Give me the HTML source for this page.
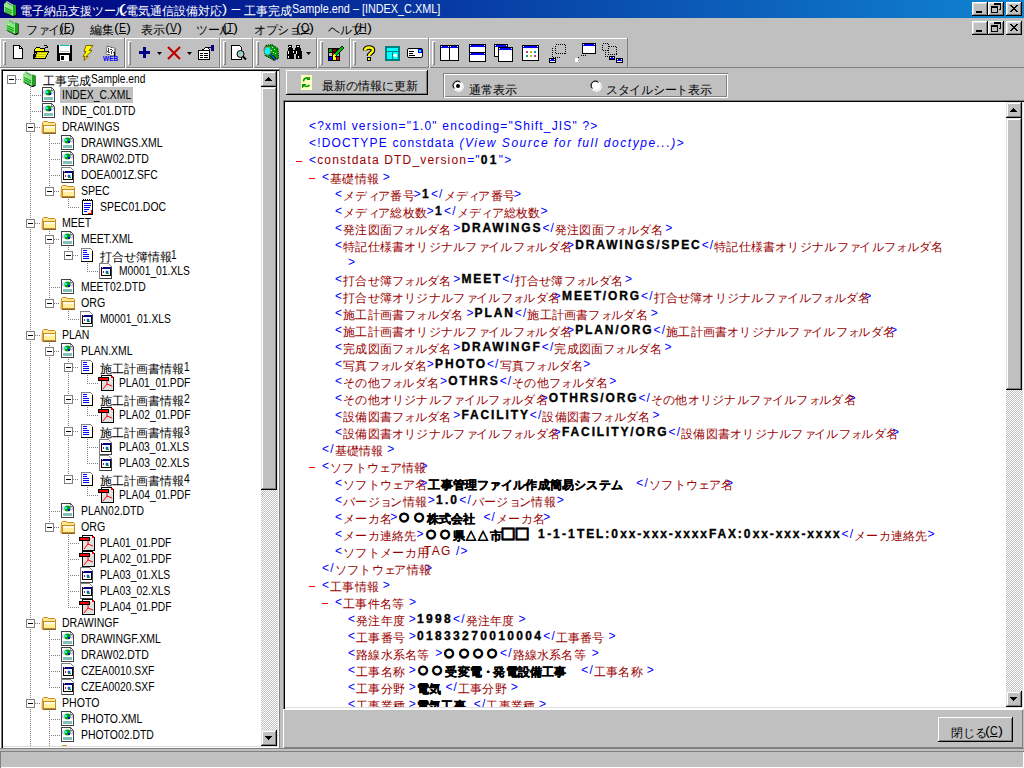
<!DOCTYPE html>
<html><head><meta charset="utf-8"><style>@font-face{font-family:J10;src:local("Liberation Sans");size-adjust:83.333%;unicode-range:U+2500-FFFF}
@font-face{font-family:J12;src:local("Liberation Sans");size-adjust:100.000%;unicode-range:U+2500-FFFF}
@font-face{font-family:J13;src:local("Liberation Sans");size-adjust:108.333%;unicode-range:U+2500-FFFF}
@font-face{font-family:J14;src:local("Liberation Sans");size-adjust:116.667%;unicode-range:U+2500-FFFF}
@font-face{font-family:J16;src:local("Liberation Sans");size-adjust:133.333%;unicode-range:U+2500-FFFF}
@font-face{font-family:J17;src:local("Liberation Sans");size-adjust:141.667%;unicode-range:U+2500-FFFF}
@font-face{font-family:J18;src:local("Liberation Sans");size-adjust:150.000%;unicode-range:U+2500-FFFF}
@font-face{font-family:J20;src:local("Liberation Sans");size-adjust:166.667%;unicode-range:U+2500-FFFF}

.sx{display:inline-block;transform-origin:0 50%;white-space:pre}
u .sx{text-decoration:underline}
.jb{display:inline-block;font-size:12px;line-height:0;position:relative;top:2px}
*{margin:0;padding:0;box-sizing:border-box}
html,body{width:1024px;height:768px;overflow:hidden}
body{background:#c0c0c0;font-family:"Liberation Sans",sans-serif;font-size:12px;position:relative;color:#000}
.a{position:absolute}
.raised{background:#c0c0c0;box-shadow:inset -1px -1px #000,inset 1px 1px #fff,inset -2px -2px #808080}
.sbtn{background:#c0c0c0;box-shadow:inset -1px -1px #000,inset 1px 1px #dfdfdf,inset -2px -2px #808080,inset 2px 2px #fff}
.wb{width:16px;height:14px;background:#c0c0c0;box-shadow:inset -1px -1px #000,inset 1px 1px #fff,inset -2px -2px #808080,inset 2px 2px #dfdfdf}
.menu>span{position:absolute;top:3px;white-space:nowrap;line-height:14px}
u{text-decoration:underline}
.dith{background-color:#fff;background-image:linear-gradient(45deg,#c0c0c0 25%,transparent 25%,transparent 75%,#c0c0c0 75%),linear-gradient(45deg,#c0c0c0 25%,transparent 25%,transparent 75%,#c0c0c0 75%);background-size:2px 2px;background-position:0 0,1px 1px}
.vl{position:absolute;width:1px;background:repeating-linear-gradient(to bottom,#808080 0 1px,transparent 1px 2px)}
.hl{position:absolute;height:1px;background:repeating-linear-gradient(to right,#808080 0 1px,transparent 1px 2px)}
.bx{position:absolute;width:9px;height:9px;border:1px solid #808080;background:#fff}
.bx:after{content:"";position:absolute;left:1px;top:3px;width:5px;height:1px;background:#000}
.tr{position:absolute;white-space:nowrap;line-height:16px;height:16px}
.xl{position:absolute;white-space:nowrap;font-size:12px;line-height:17px;height:17px}
.m{color:#0000ff}.n{color:#990000}.b{font-weight:bold;color:#000;-webkit-text-stroke:0.35px #000}.r{color:#ff0000}
</style></head><body>
<div class="a" style="left:0;top:0;width:1024px;height:18px;background:linear-gradient(to right,#000080 0%,#1084d0 100%)"><svg class="a" style="left:3px;top:1px" width="16" height="16" viewBox="0 0 16 16" shape-rendering="crispEdges"><path d="M1 3L4 0L10 3.5L13 4L13 14L10 15.5L1 11Z" fill="#000" transform="translate(0.6,0.8)" shape-rendering="geometricPrecision"/><path d="M1 3L4 0L10 3.5L10 15L1 11Z" fill="#8ce68c" shape-rendering="geometricPrecision"/><path d="M10 3.5L13 4L13 14L10 15Z" fill="#1aa51a" shape-rendering="geometricPrecision"/><path d="M2 6.5L9 10M2 8.5L9 12M2 10.5L8 13.5" stroke="#1aa51a" stroke-width="1.1" shape-rendering="geometricPrecision"/><rect x="3" y="5" width="1" height="1" fill="#ffff80"/><path d="M4 1.5L9 4.5" stroke="#806080" stroke-width="0.8" shape-rendering="geometricPrecision"/></svg><div class="a" style="left:20px;top:2px;color:#fff;white-space:nowrap;line-height:14px"><span class="jb" style="width:98.1px"><span style="font-family:J16;letter-spacing:0px">電子納品支援</span><span style="font-family:J12;letter-spacing:-0.3px">ツール</span></span><span class="sx" style="transform:scaleX(2.0000);margin-right:4.0px">(</span><span class="jb" style="width:96px"><span style="font-family:J16;letter-spacing:0px">電気通信設備対応</span></span><span class="sx" style="transform:scaleX(1.2941);margin-right:5.0px">) – </span><span class="jb" style="width:48px"><span style="font-family:J16;letter-spacing:0px">工事完成</span></span><span class="sx" style="transform:scaleX(0.9036);margin-right:-16.0px">Sample.end – [INDEX_C.XML]</span></div><div class="a wb" style="left:972px;top:2px"><div class="a" style="left:4px;top:9px;width:6px;height:2px;background:#000"></div></div><div class="a wb" style="left:988px;top:2px"><svg class="a" style="left:3px;top:1px" width="10" height="10" viewBox="0 0 10 10" shape-rendering="crispEdges"><path d="M3 0.5h6.5v5.5h-2M3 1.5h6.5" fill="none" stroke="#000"/><rect x="0.5" y="3.5" width="6" height="6" fill="none" stroke="#000"/><path d="M0.5 4.5h6" stroke="#000"/></svg></div><div class="a wb" style="left:1006px;top:2px"><svg class="a" style="left:4px;top:3px" width="8" height="7" viewBox="0 0 8 7" shape-rendering="crispEdges"><path d="M0 0L2 0L4 2.5L6 0L8 0L5 3.5L8 7L6 7L4 4.5L2 7L0 7L3 3.5Z" fill="#000"/></svg></div></div>
<div class="a menu" style="left:0;top:18px;width:1024px;height:20px"><svg class="a" style="left:5px;top:1px" width="16" height="16" viewBox="0 0 16 16" shape-rendering="crispEdges"><path d="M1 3L4 0L10 3.5L13 4L13 14L10 15.5L1 11Z" fill="#000" transform="translate(0.6,0.8)" shape-rendering="geometricPrecision"/><path d="M1 3L4 0L10 3.5L10 15L1 11Z" fill="#8ce68c" shape-rendering="geometricPrecision"/><path d="M10 3.5L13 4L13 14L10 15Z" fill="#1aa51a" shape-rendering="geometricPrecision"/><path d="M2 6.5L9 10M2 8.5L9 12M2 10.5L8 13.5" stroke="#1aa51a" stroke-width="1.1" shape-rendering="geometricPrecision"/><rect x="3" y="5" width="1" height="1" fill="#ffff80"/><path d="M4 1.5L9 4.5" stroke="#806080" stroke-width="0.8" shape-rendering="geometricPrecision"/></svg><span style="left:26px"><span class="jb" style="width:33.1px"><span style="font-family:J12;letter-spacing:-0.3px">フ</span><span style="font-family:J12;letter-spacing:-2px">ァ</span><span style="font-family:J12;letter-spacing:-0.3px">イル</span></span><span class="sx" style="transform:scaleX(1.2500);margin-right:1.0px">(</span><u><span class="sx" style="transform:scaleX(0.8571);margin-right:-1.0px">F</span></u><span class="sx" style="transform:scaleX(1.2500);margin-right:1.0px">)</span></span><span style="left:90px"><span class="jb" style="width:24px"><span style="font-family:J16;letter-spacing:0px">編集</span></span><span class="sx" style="transform:scaleX(1.2500);margin-right:1.0px">(</span><u><span class="sx" style="transform:scaleX(0.8750);margin-right:-1.0px">E</span></u><span class="sx" style="transform:scaleX(1.2500);margin-right:1.0px">)</span></span><span style="left:141px"><span class="jb" style="width:24px"><span style="font-family:J16;letter-spacing:0px">表示</span></span><span class="sx" style="transform:scaleX(1.2500);margin-right:1.0px">(</span><u><span class="sx" style="transform:scaleX(0.8750);margin-right:-1.0px">V</span></u><span class="sx" style="transform:scaleX(1.2500);margin-right:1.0px">)</span></span><span style="left:196px"><span class="jb" style="width:26.1px"><span style="font-family:J12;letter-spacing:-0.3px">ツール</span></span><span class="sx" style="transform:scaleX(1.2500);margin-right:1.0px">(</span><u><span class="sx" style="transform:scaleX(0.8571);margin-right:-1.0px">T</span></u><span class="sx" style="transform:scaleX(1.2500);margin-right:1.0px">)</span></span><span style="left:254px"><span class="jb" style="width:41.8px"><span style="font-family:J12;letter-spacing:-0.3px">オプシ</span><span style="font-family:J12;letter-spacing:-2px">ョ</span><span style="font-family:J12;letter-spacing:-0.3px">ン</span></span><span class="sx" style="transform:scaleX(1.2500);margin-right:1.0px">(</span><u><span class="sx" style="transform:scaleX(0.8889);margin-right:-1.0px">O</span></u><span class="sx" style="transform:scaleX(1.2500);margin-right:1.0px">)</span></span><span style="left:328px"><span class="jb" style="width:26.1px"><span style="font-family:J12;letter-spacing:-0.3px">ヘルプ</span></span><span class="sx" style="transform:scaleX(1.2500);margin-right:1.0px">(</span><u><span class="sx" style="transform:scaleX(0.8889);margin-right:-1.0px">H</span></u><span class="sx" style="transform:scaleX(1.2500);margin-right:1.0px">)</span></span><div class="a wb" style="left:972px;top:3px"><div class="a" style="left:4px;top:9px;width:6px;height:2px;background:#000"></div></div><div class="a wb" style="left:988px;top:3px"><svg class="a" style="left:3px;top:1px" width="10" height="10" viewBox="0 0 10 10" shape-rendering="crispEdges"><path d="M3 0.5h6.5v5.5h-2M3 1.5h6.5" fill="none" stroke="#000"/><rect x="0.5" y="3.5" width="6" height="6" fill="none" stroke="#000"/><path d="M0.5 4.5h6" stroke="#000"/></svg></div><div class="a wb" style="left:1006px;top:3px"><svg class="a" style="left:4px;top:3px" width="8" height="7" viewBox="0 0 8 7" shape-rendering="crispEdges"><path d="M0 0L2 0L4 2.5L6 0L8 0L5 3.5L8 7L6 7L4 4.5L2 7L0 7L3 3.5Z" fill="#000"/></svg></div></div>
<!-- toolbar -->
<div class="a" style="left:0;top:38px;width:628px;height:1px;background:#fff"></div><div class="a" style="left:0;top:38px;width:1px;height:29px;background:#fff"></div><div class="a" style="left:0;top:67px;width:1024px;height:1px;background:#808080"></div><div class="a" style="left:0;top:68px;width:279px;height:1px;background:#fff"></div><div class="a" style="left:124px;top:38px;width:1px;height:30px;background:#808080"></div><div class="a" style="left:125px;top:38px;width:1px;height:30px;background:#fff"></div><div class="a" style="left:219px;top:38px;width:1px;height:30px;background:#808080"></div><div class="a" style="left:220px;top:38px;width:1px;height:30px;background:#fff"></div><div class="a" style="left:252px;top:38px;width:1px;height:30px;background:#808080"></div><div class="a" style="left:253px;top:38px;width:1px;height:30px;background:#fff"></div><div class="a" style="left:316px;top:38px;width:1px;height:30px;background:#808080"></div><div class="a" style="left:317px;top:38px;width:1px;height:30px;background:#fff"></div><div class="a" style="left:349px;top:38px;width:1px;height:30px;background:#808080"></div><div class="a" style="left:350px;top:38px;width:1px;height:30px;background:#fff"></div><div class="a" style="left:428px;top:38px;width:1px;height:30px;background:#808080"></div><div class="a" style="left:429px;top:38px;width:1px;height:30px;background:#fff"></div><div class="a" style="left:627px;top:38px;width:1px;height:30px;background:#808080"></div><div class="a" style="left:3px;top:41px;width:3px;height:24px;box-shadow:inset 1px 1px #fff,inset -1px -1px #808080"></div><div class="a" style="left:128px;top:41px;width:3px;height:24px;box-shadow:inset 1px 1px #fff,inset -1px -1px #808080"></div><div class="a" style="left:223px;top:41px;width:3px;height:24px;box-shadow:inset 1px 1px #fff,inset -1px -1px #808080"></div><div class="a" style="left:256px;top:41px;width:3px;height:24px;box-shadow:inset 1px 1px #fff,inset -1px -1px #808080"></div><div class="a" style="left:320px;top:41px;width:3px;height:24px;box-shadow:inset 1px 1px #fff,inset -1px -1px #808080"></div><div class="a" style="left:353px;top:41px;width:3px;height:24px;box-shadow:inset 1px 1px #fff,inset -1px -1px #808080"></div><div class="a" style="left:432px;top:41px;width:3px;height:24px;box-shadow:inset 1px 1px #fff,inset -1px -1px #808080"></div><svg class="a" style="left:12px;top:45px" width="16" height="16" viewBox="0 0 16 16" shape-rendering="crispEdges"><path d="M1.5 0.5h6l3 3v10h-9z" fill="#fff" stroke="#000"/><path d="M7.5 0.5v3h3" fill="none" stroke="#000"/></svg><svg class="a" style="left:33px;top:44px" width="17" height="17" viewBox="0 0 17 17" shape-rendering="crispEdges"><path d="M11 1l3 1l1 2M15 2l-1 2l-2-1" fill="none" stroke="#000"/><path d="M1.5 5.5l2-2h3l1 1h4v3h-9l-2 7z" fill="#ff0" stroke="#000"/><path d="M1.5 14.5l2.5-7h11.5l-3 7z" fill="#c8c800" stroke="#000"/><path d="M5 9h9M4 11h9M4 13h8" stroke="#ff0"/></svg><svg class="a" style="left:57px;top:45px" width="16" height="16" viewBox="0 0 16 16" shape-rendering="crispEdges"><rect x="0" y="0" width="15" height="16" fill="#000"/><rect x="2" y="0" width="11" height="8" fill="#fff"/><rect x="3" y="0" width="9" height="1" fill="#00c0c0"/><rect x="3" y="10" width="9" height="6" fill="#fff"/><rect x="4" y="11" width="3" height="4" fill="#000"/><path d="M3 6h9" stroke="#c0c0c0"/></svg><svg class="a" style="left:80px;top:45px" width="16" height="16" viewBox="0 0 16 16" shape-rendering="crispEdges"><path d="M6 0.5h7l-4 5h3l-6 6h2l-4 4l1-4h-2l3-5h-2z" fill="#ff0" stroke="#806000" shape-rendering="geometricPrecision"/></svg><svg class="a" style="left:103px;top:45px" width="16" height="16" viewBox="0 0 16 16" shape-rendering="crispEdges"><path d="M4 1l8 2l-1 8l-8-2z" fill="#fff" stroke="#808080" shape-rendering="geometricPrecision"/><path d="M5 4l6 1.5M4.5 6.5l6 1.5M6 1.5l-1 8M9 2.2l-1 8" stroke="#404040" stroke-dasharray="1 1"/><path d="M12 3v8l-1 1" stroke="#808080"/><text x="0" y="16" font-size="6.5" font-weight="bold" fill="#0000ff" font-family="Liberation Sans">WEB</text></svg><svg class="a" style="left:136px;top:45px" width="16" height="16" viewBox="0 0 16 16" shape-rendering="crispEdges"><rect x="3" y="6" width="11" height="3" fill="#000080"/><rect x="7" y="2" width="3" height="11" fill="#000080"/></svg><svg class="a" style="left:157px;top:52px" width="5" height="3" viewBox="0 0 5 3" shape-rendering="crispEdges"><path d="M0 0h5l-2.5 3z" fill="#000" shape-rendering="geometricPrecision"/></svg><svg class="a" style="left:166px;top:45px" width="16" height="16" viewBox="0 0 16 16" shape-rendering="crispEdges"><path d="M2 2L14 14M14 2L2 14" stroke="#c00000" stroke-width="2.2" shape-rendering="geometricPrecision"/></svg><svg class="a" style="left:187px;top:52px" width="5" height="3" viewBox="0 0 5 3" shape-rendering="crispEdges"><path d="M0 0h5l-2.5 3z" fill="#000" shape-rendering="geometricPrecision"/></svg><svg class="a" style="left:198px;top:45px" width="17" height="16" viewBox="0 0 17 16" shape-rendering="crispEdges"><path d="M0.5 5.5h11v9h-11z" fill="#fff" stroke="#000"/><path d="M2 8h3M6 8h4M2 10h3M6 10h4M2 12h3M6 12h4" stroke="#000"/><path d="M4 5l5-3l3 3" fill="#fff" stroke="#000"/><rect x="13" y="0" width="3" height="6" fill="#000080"/><path d="M9 2h4" stroke="#000"/></svg><svg class="a" style="left:231px;top:45px" width="17" height="16" viewBox="0 0 17 16" shape-rendering="crispEdges"><path d="M0.5 0.5h8l2 2v12h-10z" fill="#fff" stroke="#000"/><circle cx="9.5" cy="9" r="3.5" fill="#c0c0c0" stroke="#000" shape-rendering="geometricPrecision"/><path d="M12 11.5l3 3" stroke="#000" stroke-width="2" shape-rendering="geometricPrecision"/><rect x="8" y="7" width="2" height="2" fill="#0ff"/></svg><svg class="a" style="left:263px;top:44px" width="16" height="17" viewBox="0 0 16 17" shape-rendering="crispEdges"><path d="M3 1.5L9 0.5L15 4.5L15.5 14.5L11 16.5L2 11.5L1 5Z" fill="#00a000" stroke="#000" stroke-dasharray="1 1" shape-rendering="geometricPrecision"/><path d="M6 3h1M9 3h1M11 5h1M8 6h1M10 8h1M12 9h1M9 10h1" stroke="#e0ffe0"/><ellipse cx="4.5" cy="7" rx="3.2" ry="4" fill="#00ffff" stroke="#808080" shape-rendering="geometricPrecision"/><path d="M7.5 10.5L12.5 15.5" stroke="#000" stroke-width="3" shape-rendering="geometricPrecision"/><path d="M7.5 10.5L12.5 15.5" stroke="#0060ff" stroke-width="1.5" shape-rendering="geometricPrecision"/></svg><svg class="a" style="left:286px;top:45px" width="17" height="15" viewBox="0 0 17 15" shape-rendering="crispEdges"><path d="M2 0h4v3h1v2h2v-2h1v-3h4v3h1v3h1v8h-6v-5h-2v5h-7v-8h1v-3h1z" fill="#000"/><rect x="3" y="1" width="2" height="1" fill="#fff"/><rect x="11" y="1" width="2" height="1" fill="#fff"/><rect x="2" y="6" width="1" height="3" fill="#fff"/><rect x="10" y="6" width="1" height="3" fill="#fff"/><rect x="7" y="6" width="1" height="2" fill="#fff"/><rect x="2" y="11" width="1" height="2" fill="#fff"/><rect x="12" y="11" width="1" height="2" fill="#fff"/></svg><svg class="a" style="left:306px;top:52px" width="5" height="3" viewBox="0 0 5 3" shape-rendering="crispEdges"><path d="M0 0h5l-2.5 3z" fill="#000" shape-rendering="geometricPrecision"/></svg><svg class="a" style="left:328px;top:45px" width="16" height="16" viewBox="0 0 16 16" shape-rendering="crispEdges"><rect x="0" y="3" width="12" height="13" fill="#000"/><rect x="1" y="4" width="3" height="3" fill="#00a000"/><rect x="5" y="4" width="3" height="3" fill="#800000"/><rect x="1" y="8" width="3" height="3" fill="#c0c0c0"/><rect x="5" y="8" width="3" height="3" fill="#ff0000"/><rect x="9" y="8" width="2" height="3" fill="#00ffff"/><rect x="1" y="12" width="3" height="3" fill="#0000ff"/><rect x="5" y="12" width="3" height="3" fill="#ffff00"/><rect x="9" y="12" width="2" height="3" fill="#ff0000"/><path d="M6 9l8-8l2 2l-8 8z" fill="#00c000" stroke="#000" stroke-width="0.8" shape-rendering="geometricPrecision"/><path d="M6 9l-1 3l3-1z" fill="#ff0"/></svg><svg class="a" style="left:362px;top:45px" width="14" height="16" viewBox="0 0 14 16" shape-rendering="crispEdges"><path d="M3 5.5C3 1.5 11 1.5 11 5C11 8 7 8 7 11" fill="none" stroke="#000" stroke-width="4.6" shape-rendering="geometricPrecision"/><path d="M3 5.5C3 1.5 11 1.5 11 5C11 8 7 8 7 11" fill="none" stroke="#ffff00" stroke-width="2.4" shape-rendering="geometricPrecision"/><rect x="5" y="12" width="4" height="4" fill="#000"/><rect x="6" y="13" width="2" height="2" fill="#ff0"/></svg><svg class="a" style="left:385px;top:46px" width="15" height="15" viewBox="0 0 15 15" shape-rendering="crispEdges"><rect x="0" y="0" width="15" height="15" fill="#008080"/><rect x="2" y="2" width="11" height="3" fill="#00ffff"/><rect x="2" y="6" width="5" height="7" fill="#00ffff"/><rect x="8" y="6" width="5" height="7" fill="#00ffff"/><circle cx="10.5" cy="9.5" r="2" fill="#fff"/></svg><svg class="a" style="left:407px;top:48px" width="16" height="11" viewBox="0 0 16 11" shape-rendering="crispEdges"><rect x="0.5" y="0.5" width="15" height="9" rx="1.5" fill="#fff" stroke="#000" shape-rendering="geometricPrecision"/><path d="M2 3h5M2 5h4M2 7h6" stroke="#000"/><rect x="11" y="1" width="4" height="4" fill="#0000ff"/><rect x="12" y="2" width="2" height="2" fill="#00ffff"/></svg><svg class="a" style="left:440px;top:45px" width="19" height="16" viewBox="0 0 19 16" shape-rendering="crispEdges"><rect x="0" y="0" width="10" height="16" fill="#000"/><rect x="1" y="1" width="8" height="2" fill="#0000ff"/><rect x="1" y="3" width="8" height="12" fill="#fff"/><rect x="1" y="1" width="1" height="1" fill="#fff"/><rect x="8" y="1" width="1" height="1" fill="#fff"/><rect x="9" y="0" width="10" height="16" fill="#000"/><rect x="10" y="1" width="8" height="2" fill="#0000ff"/><rect x="10" y="3" width="8" height="12" fill="#fff"/><rect x="10" y="1" width="1" height="1" fill="#fff"/><rect x="17" y="1" width="1" height="1" fill="#fff"/></svg><svg class="a" style="left:469px;top:44px" width="17" height="18" viewBox="0 0 17 18" shape-rendering="crispEdges"><rect x="0" y="0" width="17" height="9" fill="#000"/><rect x="1" y="1" width="15" height="2" fill="#0000ff"/><rect x="1" y="3" width="15" height="5" fill="#fff"/><rect x="1" y="1" width="1" height="1" fill="#fff"/><rect x="15" y="1" width="1" height="1" fill="#fff"/><rect x="0" y="8" width="17" height="10" fill="#000"/><rect x="1" y="9" width="15" height="2" fill="#0000ff"/><rect x="1" y="11" width="15" height="6" fill="#fff"/><rect x="1" y="9" width="1" height="1" fill="#fff"/><rect x="15" y="9" width="1" height="1" fill="#fff"/></svg><svg class="a" style="left:494px;top:44px" width="19" height="18" viewBox="0 0 19 18" shape-rendering="crispEdges"><rect x="0" y="0" width="14" height="13" fill="#000"/><rect x="1" y="1" width="12" height="2" fill="#0000ff"/><rect x="1" y="3" width="12" height="9" fill="#fff"/><rect x="1" y="1" width="1" height="1" fill="#fff"/><rect x="12" y="1" width="1" height="1" fill="#fff"/><rect x="4" y="3" width="15" height="15" fill="#000"/><rect x="5" y="4" width="13" height="2" fill="#0000ff"/><rect x="5" y="6" width="13" height="11" fill="#fff"/><rect x="5" y="4" width="1" height="1" fill="#fff"/><rect x="17" y="4" width="1" height="1" fill="#fff"/></svg><svg class="a" style="left:522px;top:45px" width="17" height="16" viewBox="0 0 17 16" shape-rendering="crispEdges"><rect x="0" y="0" width="17" height="16" fill="#000"/><rect x="1" y="1" width="15" height="2" fill="#0000ff"/><rect x="1" y="3" width="15" height="12" fill="#fff"/><rect x="1" y="1" width="1" height="1" fill="#fff"/><rect x="15" y="1" width="1" height="1" fill="#fff"/><rect x="4" y="6" width="2" height="2" fill="#c04080"/><rect x="8" y="6" width="2" height="2" fill="#c0c000"/><rect x="12" y="6" width="2" height="2" fill="#00a0a0"/><rect x="4" y="10" width="2" height="2" fill="#00a0a0"/><rect x="8" y="10" width="2" height="2" fill="#c0c000"/><rect x="12" y="10" width="2" height="2" fill="#c04080"/></svg><svg class="a" style="left:549px;top:42px" width="20" height="21" viewBox="0 0 20 21" shape-rendering="crispEdges"><path d="M6.5 2.5h10v9h-10zM3.5 5.5v10M3.5 15.5h7" fill="none" stroke="#000" stroke-dasharray="1 1"/><rect x="0" y="16" width="7" height="5" fill="#000"/><rect x="1" y="17" width="5" height="2" fill="#0000ff"/><rect x="1" y="19" width="5" height="1" fill="#fff"/><rect x="1" y="17" width="1" height="1" fill="#fff"/><rect x="5" y="17" width="1" height="1" fill="#fff"/></svg><svg class="a" style="left:575px;top:42px" width="21" height="20" viewBox="0 0 21 20" shape-rendering="crispEdges"><rect x="7" y="1" width="14" height="11" fill="#000"/><rect x="8" y="2" width="12" height="2" fill="#0000ff"/><rect x="8" y="4" width="12" height="7" fill="#fff"/><rect x="8" y="2" width="1" height="1" fill="#fff"/><rect x="19" y="2" width="1" height="1" fill="#fff"/><path d="M5.5 13.5h6M3.5 15.5l-2 2" fill="none" stroke="#000" stroke-dasharray="1 1"/><rect x="0" y="16" width="3" height="4" fill="#fff"/></svg><svg class="a" style="left:602px;top:42px" width="21" height="21" viewBox="0 0 21 21" shape-rendering="crispEdges"><path d="M0.5 1.5h6v7h-6zM6.5 4.5h8v8h-8zM3.5 9.5v5h9" fill="none" stroke="#000" stroke-dasharray="1 1"/><rect x="7" y="14" width="6" height="4" fill="#000"/><rect x="8" y="15" width="4" height="2" fill="#0000ff"/><rect x="8" y="17" width="4" height="0" fill="#fff"/><rect x="8" y="15" width="1" height="1" fill="#fff"/><rect x="11" y="15" width="1" height="1" fill="#fff"/><rect x="14" y="16" width="7" height="5" fill="#000"/><rect x="15" y="17" width="5" height="2" fill="#0000ff"/><rect x="15" y="19" width="5" height="1" fill="#fff"/><rect x="15" y="17" width="1" height="1" fill="#fff"/><rect x="19" y="17" width="1" height="1" fill="#fff"/></svg><!-- tree -->
<div class="a" style="left:1px;top:69px;width:278px;height:679px;background:#fff;box-shadow:inset 1px 1px #808080,inset 2px 2px #000,inset -1px -1px #fff,inset -2px -2px #dfdfdf"></div><div class="a" style="left:279px;top:69px;width:1px;height:679px;background:#808080"></div><div class="a" style="left:0;top:69px;width:1px;height:679px;background:#fff"></div><div class="a" style="left:3px;top:71px;width:258px;height:675px;overflow:hidden"><div class="hl" style="left:13px;top:8px;width:6px"></div><div class="bx" style="left:4px;top:4px"></div><svg class="a" style="left:19px;top:0px" width="16" height="16" viewBox="0 0 16 16" shape-rendering="crispEdges"><path d="M1 3L4 0L10 3.5L13 4L13 14L10 15.5L1 11Z" fill="#000" transform="translate(0.6,0.8)" shape-rendering="geometricPrecision"/><path d="M1 3L4 0L10 3.5L10 15L1 11Z" fill="#8ce68c" shape-rendering="geometricPrecision"/><path d="M10 3.5L13 4L13 14L10 15Z" fill="#1aa51a" shape-rendering="geometricPrecision"/><path d="M2 6.5L9 10M2 8.5L9 12M2 10.5L8 13.5" stroke="#1aa51a" stroke-width="1.1" shape-rendering="geometricPrecision"/><rect x="3" y="5" width="1" height="1" fill="#ffff80"/><path d="M4 1.5L9 4.5" stroke="#806080" stroke-width="0.8" shape-rendering="geometricPrecision"/></svg><div class="tr" style="left:40px;top:0px"><span class="jb" style="width:48px"><span style="font-family:J16;letter-spacing:0px">工事完成</span></span><span class="sx" style="transform:scaleX(0.8485);margin-right:-10.0px">Sample.end</span></div><div class="hl" style="left:27px;top:24px;width:11px"></div><div class="vl" style="left:27px;top:16px;height:24px"></div><svg class="a" style="left:38px;top:16px" width="16" height="16" viewBox="0 0 16 16" shape-rendering="crispEdges"><path d="M1.5 0.5h9l3 3v11h-12z" fill="#fff" stroke="#404040"/><path d="M10.5 0.5v3h3" fill="none" stroke="#808080"/><ellipse cx="7.5" cy="5.5" rx="5.5" ry="1.6" fill="none" stroke="#8080ff" stroke-width="0.7" shape-rendering="geometricPrecision"/><circle cx="7.5" cy="5.5" r="3" fill="#00a000" shape-rendering="geometricPrecision"/><path d="M5 4h2v2h-2z" fill="#00ffff"/><path d="M8 6h2v2h-2z" fill="#0000c0"/><rect x="3" y="10" width="9" height="3" fill="#80c0c0"/></svg><div class="a" style="left:57px;top:16px;width:73px;height:16px;background:#c0c0c0"></div><div class="tr" style="left:59px;top:16px"><span class="sx" style="transform:scaleX(0.8642);margin-right:-11.0px">INDEX_C.XML</span></div><div class="hl" style="left:27px;top:40px;width:11px"></div><div class="vl" style="left:27px;top:32px;height:24px"></div><svg class="a" style="left:38px;top:32px" width="16" height="16" viewBox="0 0 16 16" shape-rendering="crispEdges"><path d="M1.5 0.5h9l3 3v11h-12z" fill="#fff" stroke="#404040"/><path d="M10.5 0.5v3h3" fill="none" stroke="#808080"/><ellipse cx="7.5" cy="5.5" rx="5.5" ry="1.6" fill="none" stroke="#8080ff" stroke-width="0.7" shape-rendering="geometricPrecision"/><circle cx="7.5" cy="5.5" r="3" fill="#00a000" shape-rendering="geometricPrecision"/><path d="M5 4h2v2h-2z" fill="#00ffff"/><path d="M8 6h2v2h-2z" fill="#0000c0"/><rect x="3" y="10" width="9" height="3" fill="#80c0c0"/></svg><div class="tr" style="left:59px;top:32px"><span class="sx" style="transform:scaleX(0.8606);margin-right:-12.0px">INDE_C01.DTD</span></div><div class="hl" style="left:32px;top:56px;width:6px"></div><div class="vl" style="left:27px;top:48px;height:104px"></div><div class="bx" style="left:23px;top:52px"></div><svg class="a" style="left:38px;top:48px" width="16" height="16" viewBox="0 0 16 16" shape-rendering="crispEdges"><path d="M1.5 3.5l1-1h4l1 1h6l1 1v9.5h-13.5z" fill="#ffe890" stroke="#c88a20" shape-rendering="geometricPrecision"/><path d="M2.5 6.5h12v7h-12z" fill="#fff0a0" stroke="#c88a20"/><rect x="3" y="7" width="11" height="2" fill="#fffbe0"/><path d="M2 14.5h13" stroke="#806030"/></svg><div class="tr" style="left:59px;top:48px"><span class="sx" style="transform:scaleX(0.8788);margin-right:-8.0px">DRAWINGS</span></div><div class="hl" style="left:46px;top:72px;width:11px"></div><div class="vl" style="left:46px;top:64px;height:24px"></div><svg class="a" style="left:57px;top:64px" width="16" height="16" viewBox="0 0 16 16" shape-rendering="crispEdges"><path d="M1.5 0.5h9l3 3v11h-12z" fill="#fff" stroke="#404040"/><path d="M10.5 0.5v3h3" fill="none" stroke="#808080"/><ellipse cx="7.5" cy="5.5" rx="5.5" ry="1.6" fill="none" stroke="#8080ff" stroke-width="0.7" shape-rendering="geometricPrecision"/><circle cx="7.5" cy="5.5" r="3" fill="#00a000" shape-rendering="geometricPrecision"/><path d="M5 4h2v2h-2z" fill="#00ffff"/><path d="M8 6h2v2h-2z" fill="#0000c0"/><rect x="3" y="10" width="9" height="3" fill="#80c0c0"/></svg><div class="tr" style="left:78px;top:64px"><span class="sx" style="transform:scaleX(0.8723);margin-right:-12.0px">DRAWINGS.XML</span></div><div class="hl" style="left:46px;top:88px;width:11px"></div><div class="vl" style="left:46px;top:80px;height:24px"></div><svg class="a" style="left:57px;top:80px" width="16" height="16" viewBox="0 0 16 16" shape-rendering="crispEdges"><path d="M1.5 0.5h9l3 3v11h-12z" fill="#fff" stroke="#404040"/><path d="M10.5 0.5v3h3" fill="none" stroke="#808080"/><ellipse cx="7.5" cy="5.5" rx="5.5" ry="1.6" fill="none" stroke="#8080ff" stroke-width="0.7" shape-rendering="geometricPrecision"/><circle cx="7.5" cy="5.5" r="3" fill="#00a000" shape-rendering="geometricPrecision"/><path d="M5 4h2v2h-2z" fill="#00ffff"/><path d="M8 6h2v2h-2z" fill="#0000c0"/><rect x="3" y="10" width="9" height="3" fill="#80c0c0"/></svg><div class="tr" style="left:78px;top:80px"><span class="sx" style="transform:scaleX(0.8734);margin-right:-10.0px">DRAW02.DTD</span></div><div class="hl" style="left:46px;top:104px;width:11px"></div><div class="vl" style="left:46px;top:96px;height:24px"></div><svg class="a" style="left:57px;top:96px" width="16" height="16" viewBox="0 0 16 16" shape-rendering="crispEdges"><path d="M1.5 0.5h9l3 3v12h-12z" fill="#fff" stroke="#808080"/><path d="M13.5 3.5v12h-12" fill="none" stroke="#404040"/><rect x="3" y="4" width="10" height="9" fill="#000"/><rect x="3" y="4" width="10" height="2" fill="#000080"/><rect x="4" y="6" width="8" height="6" fill="#fff"/><path d="M4 9l2-2v4z" fill="#ff0000"/><circle cx="9" cy="9" r="1.5" fill="#0060ff" shape-rendering="geometricPrecision"/><rect x="8" y="10" width="3" height="1" fill="#00a000"/><rect x="4" y="4" width="1" height="1" fill="#ffc000"/></svg><div class="tr" style="left:78px;top:96px"><span class="sx" style="transform:scaleX(0.8638);margin-right:-12.0px">DOEA001Z.SFC</span></div><div class="hl" style="left:51px;top:120px;width:6px"></div><div class="vl" style="left:46px;top:112px;height:9px"></div><div class="bx" style="left:42px;top:116px"></div><svg class="a" style="left:57px;top:112px" width="16" height="16" viewBox="0 0 16 16" shape-rendering="crispEdges"><path d="M1.5 3.5l1-1h4l1 1h6l1 1v9.5h-13.5z" fill="#ffe890" stroke="#c88a20" shape-rendering="geometricPrecision"/><path d="M2.5 6.5h12v7h-12z" fill="#fff0a0" stroke="#c88a20"/><rect x="3" y="7" width="11" height="2" fill="#fffbe0"/><path d="M2 14.5h13" stroke="#806030"/></svg><div class="tr" style="left:78px;top:112px"><span class="sx" style="transform:scaleX(0.8788);margin-right:-4.0px">SPEC</span></div><div class="hl" style="left:65px;top:136px;width:11px"></div><div class="vl" style="left:65px;top:128px;height:9px"></div><svg class="a" style="left:76px;top:128px" width="16" height="16" viewBox="0 0 16 16" shape-rendering="crispEdges"><path d="M3.5 1.5h10v14h-10z" fill="#fff" stroke="#000"/><path d="M4 0.5h9" stroke="#000" stroke-dasharray="1 1"/><path d="M5 4h7M5 6h7M5 8h6M5 10h5M5 12h3" stroke="#0000ff"/><path d="M8 15l5-5v5z" fill="#ff0000"/><rect x="10" y="12" width="2" height="2" fill="#fff"/></svg><div class="tr" style="left:97px;top:128px"><span class="sx" style="transform:scaleX(0.8686);margin-right:-10.0px">SPEC01.DOC</span></div><div class="hl" style="left:32px;top:152px;width:6px"></div><div class="vl" style="left:27px;top:144px;height:120px"></div><div class="bx" style="left:23px;top:148px"></div><svg class="a" style="left:38px;top:144px" width="16" height="16" viewBox="0 0 16 16" shape-rendering="crispEdges"><path d="M1.5 3.5l1-1h4l1 1h6l1 1v9.5h-13.5z" fill="#ffe890" stroke="#c88a20" shape-rendering="geometricPrecision"/><path d="M2.5 6.5h12v7h-12z" fill="#fff0a0" stroke="#c88a20"/><rect x="3" y="7" width="11" height="2" fill="#fffbe0"/><path d="M2 14.5h13" stroke="#806030"/></svg><div class="tr" style="left:59px;top:144px"><span class="sx" style="transform:scaleX(0.8788);margin-right:-4.0px">MEET</span></div><div class="hl" style="left:51px;top:168px;width:6px"></div><div class="vl" style="left:46px;top:160px;height:56px"></div><div class="bx" style="left:42px;top:164px"></div><svg class="a" style="left:57px;top:160px" width="16" height="16" viewBox="0 0 16 16" shape-rendering="crispEdges"><path d="M1.5 0.5h9l3 3v11h-12z" fill="#fff" stroke="#404040"/><path d="M10.5 0.5v3h3" fill="none" stroke="#808080"/><ellipse cx="7.5" cy="5.5" rx="5.5" ry="1.6" fill="none" stroke="#8080ff" stroke-width="0.7" shape-rendering="geometricPrecision"/><circle cx="7.5" cy="5.5" r="3" fill="#00a000" shape-rendering="geometricPrecision"/><path d="M5 4h2v2h-2z" fill="#00ffff"/><path d="M8 6h2v2h-2z" fill="#0000c0"/><rect x="3" y="10" width="9" height="3" fill="#80c0c0"/></svg><div class="tr" style="left:78px;top:160px"><span class="sx" style="transform:scaleX(0.8689);margin-right:-8.0px">MEET.XML</span></div><div class="hl" style="left:70px;top:184px;width:6px"></div><div class="vl" style="left:65px;top:176px;height:9px"></div><div class="bx" style="left:61px;top:180px"></div><svg class="a" style="left:76px;top:176px" width="16" height="16" viewBox="0 0 16 16" shape-rendering="crispEdges"><path d="M2.5 1.5h9l2 2v11h-11z" fill="#fff" stroke="#808080"/><path d="M13.5 3.5v11h-11" fill="none" stroke="#000" stroke-width="1"/><path d="M2 14.5h12" stroke="#000" stroke-width="1"/><path d="M4 3h4M4 5h4M4 7h6M4 9h6M4 11h6" stroke="#0000ff"/></svg><div class="tr" style="left:97px;top:176px"><span class="jb" style="width:71px"><span style="font-family:J16;letter-spacing:0px">打合</span><span style="font-family:J14;letter-spacing:0px">せ</span><span style="font-family:J16;letter-spacing:0px">簿情報</span></span><span class="sx" style="transform:scaleX(0.8361);margin-right:-1.0px">1</span></div><div class="hl" style="left:84px;top:200px;width:11px"></div><div class="vl" style="left:84px;top:192px;height:9px"></div><svg class="a" style="left:95px;top:192px" width="16" height="16" viewBox="0 0 16 16" shape-rendering="crispEdges"><path d="M1.5 0.5h9l3 3v12h-12z" fill="#fff" stroke="#808080"/><path d="M13.5 3.5v12h-12" fill="none" stroke="#404040"/><rect x="3" y="4" width="10" height="9" fill="#000"/><rect x="3" y="4" width="10" height="2" fill="#000080"/><rect x="4" y="6" width="8" height="6" fill="#fff"/><path d="M4 9l2-2v4z" fill="#ff0000"/><circle cx="9" cy="9" r="1.5" fill="#0060ff" shape-rendering="geometricPrecision"/><rect x="8" y="10" width="3" height="1" fill="#00a000"/><rect x="4" y="4" width="1" height="1" fill="#ffc000"/></svg><div class="tr" style="left:116px;top:192px"><span class="sx" style="transform:scaleX(0.8558);margin-right:-12.0px">M0001_01.XLS</span></div><div class="hl" style="left:46px;top:216px;width:11px"></div><div class="vl" style="left:46px;top:208px;height:24px"></div><svg class="a" style="left:57px;top:208px" width="16" height="16" viewBox="0 0 16 16" shape-rendering="crispEdges"><path d="M1.5 0.5h9l3 3v11h-12z" fill="#fff" stroke="#404040"/><path d="M10.5 0.5v3h3" fill="none" stroke="#808080"/><ellipse cx="7.5" cy="5.5" rx="5.5" ry="1.6" fill="none" stroke="#8080ff" stroke-width="0.7" shape-rendering="geometricPrecision"/><circle cx="7.5" cy="5.5" r="3" fill="#00a000" shape-rendering="geometricPrecision"/><path d="M5 4h2v2h-2z" fill="#00ffff"/><path d="M8 6h2v2h-2z" fill="#0000c0"/><rect x="3" y="10" width="9" height="3" fill="#80c0c0"/></svg><div class="tr" style="left:78px;top:208px"><span class="sx" style="transform:scaleX(0.8667);margin-right:-10.0px">MEET02.DTD</span></div><div class="hl" style="left:51px;top:232px;width:6px"></div><div class="vl" style="left:46px;top:224px;height:9px"></div><div class="bx" style="left:42px;top:228px"></div><svg class="a" style="left:57px;top:224px" width="16" height="16" viewBox="0 0 16 16" shape-rendering="crispEdges"><path d="M1.5 3.5l1-1h4l1 1h6l1 1v9.5h-13.5z" fill="#ffe890" stroke="#c88a20" shape-rendering="geometricPrecision"/><path d="M2.5 6.5h12v7h-12z" fill="#fff0a0" stroke="#c88a20"/><rect x="3" y="7" width="11" height="2" fill="#fffbe0"/><path d="M2 14.5h13" stroke="#806030"/></svg><div class="tr" style="left:78px;top:224px"><span class="sx" style="transform:scaleX(0.8889);margin-right:-3.0px">ORG</span></div><div class="hl" style="left:65px;top:248px;width:11px"></div><div class="vl" style="left:65px;top:240px;height:9px"></div><svg class="a" style="left:76px;top:240px" width="16" height="16" viewBox="0 0 16 16" shape-rendering="crispEdges"><path d="M1.5 0.5h9l3 3v12h-12z" fill="#fff" stroke="#808080"/><path d="M13.5 3.5v12h-12" fill="none" stroke="#404040"/><rect x="3" y="4" width="10" height="9" fill="#000"/><rect x="3" y="4" width="10" height="2" fill="#000080"/><rect x="4" y="6" width="8" height="6" fill="#fff"/><path d="M4 9l2-2v4z" fill="#ff0000"/><circle cx="9" cy="9" r="1.5" fill="#0060ff" shape-rendering="geometricPrecision"/><rect x="8" y="10" width="3" height="1" fill="#00a000"/><rect x="4" y="4" width="1" height="1" fill="#ffc000"/></svg><div class="tr" style="left:97px;top:240px"><span class="sx" style="transform:scaleX(0.8558);margin-right:-12.0px">M0001_01.XLS</span></div><div class="hl" style="left:32px;top:264px;width:6px"></div><div class="vl" style="left:27px;top:256px;height:296px"></div><div class="bx" style="left:23px;top:260px"></div><svg class="a" style="left:38px;top:256px" width="16" height="16" viewBox="0 0 16 16" shape-rendering="crispEdges"><path d="M1.5 3.5l1-1h4l1 1h6l1 1v9.5h-13.5z" fill="#ffe890" stroke="#c88a20" shape-rendering="geometricPrecision"/><path d="M2.5 6.5h12v7h-12z" fill="#fff0a0" stroke="#c88a20"/><rect x="3" y="7" width="11" height="2" fill="#fffbe0"/><path d="M2 14.5h13" stroke="#806030"/></svg><div class="tr" style="left:59px;top:256px"><span class="sx" style="transform:scaleX(0.8750);margin-right:-4.0px">PLAN</span></div><div class="hl" style="left:51px;top:280px;width:6px"></div><div class="vl" style="left:46px;top:272px;height:168px"></div><div class="bx" style="left:42px;top:276px"></div><svg class="a" style="left:57px;top:272px" width="16" height="16" viewBox="0 0 16 16" shape-rendering="crispEdges"><path d="M1.5 0.5h9l3 3v11h-12z" fill="#fff" stroke="#404040"/><path d="M10.5 0.5v3h3" fill="none" stroke="#808080"/><ellipse cx="7.5" cy="5.5" rx="5.5" ry="1.6" fill="none" stroke="#8080ff" stroke-width="0.7" shape-rendering="geometricPrecision"/><circle cx="7.5" cy="5.5" r="3" fill="#00a000" shape-rendering="geometricPrecision"/><path d="M5 4h2v2h-2z" fill="#00ffff"/><path d="M8 6h2v2h-2z" fill="#0000c0"/><rect x="3" y="10" width="9" height="3" fill="#80c0c0"/></svg><div class="tr" style="left:78px;top:272px"><span class="sx" style="transform:scaleX(0.8667);margin-right:-8.0px">PLAN.XML</span></div><div class="hl" style="left:70px;top:296px;width:6px"></div><div class="vl" style="left:65px;top:288px;height:40px"></div><div class="bx" style="left:61px;top:292px"></div><svg class="a" style="left:76px;top:288px" width="16" height="16" viewBox="0 0 16 16" shape-rendering="crispEdges"><path d="M2.5 1.5h9l2 2v11h-11z" fill="#fff" stroke="#808080"/><path d="M13.5 3.5v11h-11" fill="none" stroke="#000" stroke-width="1"/><path d="M2 14.5h12" stroke="#000" stroke-width="1"/><path d="M4 3h4M4 5h4M4 7h6M4 9h6M4 11h6" stroke="#0000ff"/></svg><div class="tr" style="left:97px;top:288px"><span class="jb" style="width:84px"><span style="font-family:J16;letter-spacing:0px">施工計画書情報</span></span><span class="sx" style="transform:scaleX(0.8361);margin-right:-1.0px">1</span></div><div class="hl" style="left:84px;top:312px;width:11px"></div><div class="vl" style="left:84px;top:304px;height:9px"></div><svg class="a" style="left:95px;top:304px" width="16" height="16" viewBox="0 0 16 16" shape-rendering="crispEdges"><path d="M3.5 0.5h10l2 2v13h-12z" fill="#e0e0e0" stroke="#000"/><rect x="4" y="1" width="9" height="2" fill="#fff"/><rect x="0" y="2" width="11" height="4" fill="#000"/><rect x="1" y="3" width="9" height="2" fill="#ff0000"/><rect x="13" y="1" width="2" height="2" fill="#ff0000"/><path d="M9 6v3l-4 5M9 9l5 2" fill="none" stroke="#ff0000" shape-rendering="geometricPrecision"/></svg><div class="tr" style="left:116px;top:304px"><span class="sx" style="transform:scaleX(0.8558);margin-right:-12.0px">PLA01_01.PDF</span></div><div class="hl" style="left:70px;top:328px;width:6px"></div><div class="vl" style="left:65px;top:320px;height:40px"></div><div class="bx" style="left:61px;top:324px"></div><svg class="a" style="left:76px;top:320px" width="16" height="16" viewBox="0 0 16 16" shape-rendering="crispEdges"><path d="M2.5 1.5h9l2 2v11h-11z" fill="#fff" stroke="#808080"/><path d="M13.5 3.5v11h-11" fill="none" stroke="#000" stroke-width="1"/><path d="M2 14.5h12" stroke="#000" stroke-width="1"/><path d="M4 3h4M4 5h4M4 7h6M4 9h6M4 11h6" stroke="#0000ff"/></svg><div class="tr" style="left:97px;top:320px"><span class="jb" style="width:84px"><span style="font-family:J16;letter-spacing:0px">施工計画書情報</span></span><span class="sx" style="transform:scaleX(0.8571);margin-right:-1.0px">2</span></div><div class="hl" style="left:84px;top:344px;width:11px"></div><div class="vl" style="left:84px;top:336px;height:9px"></div><svg class="a" style="left:95px;top:336px" width="16" height="16" viewBox="0 0 16 16" shape-rendering="crispEdges"><path d="M3.5 0.5h10l2 2v13h-12z" fill="#e0e0e0" stroke="#000"/><rect x="4" y="1" width="9" height="2" fill="#fff"/><rect x="0" y="2" width="11" height="4" fill="#000"/><rect x="1" y="3" width="9" height="2" fill="#ff0000"/><rect x="13" y="1" width="2" height="2" fill="#ff0000"/><path d="M9 6v3l-4 5M9 9l5 2" fill="none" stroke="#ff0000" shape-rendering="geometricPrecision"/></svg><div class="tr" style="left:116px;top:336px"><span class="sx" style="transform:scaleX(0.8573);margin-right:-12.0px">PLA02_01.PDF</span></div><div class="hl" style="left:70px;top:360px;width:6px"></div><div class="vl" style="left:65px;top:352px;height:56px"></div><div class="bx" style="left:61px;top:356px"></div><svg class="a" style="left:76px;top:352px" width="16" height="16" viewBox="0 0 16 16" shape-rendering="crispEdges"><path d="M2.5 1.5h9l2 2v11h-11z" fill="#fff" stroke="#808080"/><path d="M13.5 3.5v11h-11" fill="none" stroke="#000" stroke-width="1"/><path d="M2 14.5h12" stroke="#000" stroke-width="1"/><path d="M4 3h4M4 5h4M4 7h6M4 9h6M4 11h6" stroke="#0000ff"/></svg><div class="tr" style="left:97px;top:352px"><span class="jb" style="width:84px"><span style="font-family:J16;letter-spacing:0px">施工計画書情報</span></span><span class="sx" style="transform:scaleX(0.8571);margin-right:-1.0px">3</span></div><div class="hl" style="left:84px;top:376px;width:11px"></div><div class="vl" style="left:84px;top:368px;height:24px"></div><svg class="a" style="left:95px;top:368px" width="16" height="16" viewBox="0 0 16 16" shape-rendering="crispEdges"><path d="M1.5 0.5h9l3 3v12h-12z" fill="#fff" stroke="#808080"/><path d="M13.5 3.5v12h-12" fill="none" stroke="#404040"/><rect x="3" y="4" width="10" height="9" fill="#000"/><rect x="3" y="4" width="10" height="2" fill="#000080"/><rect x="4" y="6" width="8" height="6" fill="#fff"/><path d="M4 9l2-2v4z" fill="#ff0000"/><circle cx="9" cy="9" r="1.5" fill="#0060ff" shape-rendering="geometricPrecision"/><rect x="8" y="10" width="3" height="1" fill="#00a000"/><rect x="4" y="4" width="1" height="1" fill="#ffc000"/></svg><div class="tr" style="left:116px;top:368px"><span class="sx" style="transform:scaleX(0.8556);margin-right:-12.0px">PLA03_01.XLS</span></div><div class="hl" style="left:84px;top:392px;width:11px"></div><div class="vl" style="left:84px;top:384px;height:9px"></div><svg class="a" style="left:95px;top:384px" width="16" height="16" viewBox="0 0 16 16" shape-rendering="crispEdges"><path d="M1.5 0.5h9l3 3v12h-12z" fill="#fff" stroke="#808080"/><path d="M13.5 3.5v12h-12" fill="none" stroke="#404040"/><rect x="3" y="4" width="10" height="9" fill="#000"/><rect x="3" y="4" width="10" height="2" fill="#000080"/><rect x="4" y="6" width="8" height="6" fill="#fff"/><path d="M4 9l2-2v4z" fill="#ff0000"/><circle cx="9" cy="9" r="1.5" fill="#0060ff" shape-rendering="geometricPrecision"/><rect x="8" y="10" width="3" height="1" fill="#00a000"/><rect x="4" y="4" width="1" height="1" fill="#ffc000"/></svg><div class="tr" style="left:116px;top:384px"><span class="sx" style="transform:scaleX(0.8571);margin-right:-12.0px">PLA03_02.XLS</span></div><div class="hl" style="left:70px;top:408px;width:6px"></div><div class="vl" style="left:65px;top:400px;height:9px"></div><div class="bx" style="left:61px;top:404px"></div><svg class="a" style="left:76px;top:400px" width="16" height="16" viewBox="0 0 16 16" shape-rendering="crispEdges"><path d="M2.5 1.5h9l2 2v11h-11z" fill="#fff" stroke="#808080"/><path d="M13.5 3.5v11h-11" fill="none" stroke="#000" stroke-width="1"/><path d="M2 14.5h12" stroke="#000" stroke-width="1"/><path d="M4 3h4M4 5h4M4 7h6M4 9h6M4 11h6" stroke="#0000ff"/></svg><div class="tr" style="left:97px;top:400px"><span class="jb" style="width:84px"><span style="font-family:J16;letter-spacing:0px">施工計画書情報</span></span><span class="sx" style="transform:scaleX(0.8571);margin-right:-1.0px">4</span></div><div class="hl" style="left:84px;top:424px;width:11px"></div><div class="vl" style="left:84px;top:416px;height:9px"></div><svg class="a" style="left:95px;top:416px" width="16" height="16" viewBox="0 0 16 16" shape-rendering="crispEdges"><path d="M3.5 0.5h10l2 2v13h-12z" fill="#e0e0e0" stroke="#000"/><rect x="4" y="1" width="9" height="2" fill="#fff"/><rect x="0" y="2" width="11" height="4" fill="#000"/><rect x="1" y="3" width="9" height="2" fill="#ff0000"/><rect x="13" y="1" width="2" height="2" fill="#ff0000"/><path d="M9 6v3l-4 5M9 9l5 2" fill="none" stroke="#ff0000" shape-rendering="geometricPrecision"/></svg><div class="tr" style="left:116px;top:416px"><span class="sx" style="transform:scaleX(0.8573);margin-right:-12.0px">PLA04_01.PDF</span></div><div class="hl" style="left:46px;top:440px;width:11px"></div><div class="vl" style="left:46px;top:432px;height:24px"></div><svg class="a" style="left:57px;top:432px" width="16" height="16" viewBox="0 0 16 16" shape-rendering="crispEdges"><path d="M1.5 0.5h9l3 3v11h-12z" fill="#fff" stroke="#404040"/><path d="M10.5 0.5v3h3" fill="none" stroke="#808080"/><ellipse cx="7.5" cy="5.5" rx="5.5" ry="1.6" fill="none" stroke="#8080ff" stroke-width="0.7" shape-rendering="geometricPrecision"/><circle cx="7.5" cy="5.5" r="3" fill="#00a000" shape-rendering="geometricPrecision"/><path d="M5 4h2v2h-2z" fill="#00ffff"/><path d="M8 6h2v2h-2z" fill="#0000c0"/><rect x="3" y="10" width="9" height="3" fill="#80c0c0"/></svg><div class="tr" style="left:78px;top:432px"><span class="sx" style="transform:scaleX(0.8649);margin-right:-10.0px">PLAN02.DTD</span></div><div class="hl" style="left:51px;top:456px;width:6px"></div><div class="vl" style="left:46px;top:448px;height:9px"></div><div class="bx" style="left:42px;top:452px"></div><svg class="a" style="left:57px;top:448px" width="16" height="16" viewBox="0 0 16 16" shape-rendering="crispEdges"><path d="M1.5 3.5l1-1h4l1 1h6l1 1v9.5h-13.5z" fill="#ffe890" stroke="#c88a20" shape-rendering="geometricPrecision"/><path d="M2.5 6.5h12v7h-12z" fill="#fff0a0" stroke="#c88a20"/><rect x="3" y="7" width="11" height="2" fill="#fffbe0"/><path d="M2 14.5h13" stroke="#806030"/></svg><div class="tr" style="left:78px;top:448px"><span class="sx" style="transform:scaleX(0.8889);margin-right:-3.0px">ORG</span></div><div class="hl" style="left:65px;top:472px;width:11px"></div><div class="vl" style="left:65px;top:464px;height:24px"></div><svg class="a" style="left:76px;top:464px" width="16" height="16" viewBox="0 0 16 16" shape-rendering="crispEdges"><path d="M3.5 0.5h10l2 2v13h-12z" fill="#e0e0e0" stroke="#000"/><rect x="4" y="1" width="9" height="2" fill="#fff"/><rect x="0" y="2" width="11" height="4" fill="#000"/><rect x="1" y="3" width="9" height="2" fill="#ff0000"/><rect x="13" y="1" width="2" height="2" fill="#ff0000"/><path d="M9 6v3l-4 5M9 9l5 2" fill="none" stroke="#ff0000" shape-rendering="geometricPrecision"/></svg><div class="tr" style="left:97px;top:464px"><span class="sx" style="transform:scaleX(0.8558);margin-right:-12.0px">PLA01_01.PDF</span></div><div class="hl" style="left:65px;top:488px;width:11px"></div><div class="vl" style="left:65px;top:480px;height:24px"></div><svg class="a" style="left:76px;top:480px" width="16" height="16" viewBox="0 0 16 16" shape-rendering="crispEdges"><path d="M3.5 0.5h10l2 2v13h-12z" fill="#e0e0e0" stroke="#000"/><rect x="4" y="1" width="9" height="2" fill="#fff"/><rect x="0" y="2" width="11" height="4" fill="#000"/><rect x="1" y="3" width="9" height="2" fill="#ff0000"/><rect x="13" y="1" width="2" height="2" fill="#ff0000"/><path d="M9 6v3l-4 5M9 9l5 2" fill="none" stroke="#ff0000" shape-rendering="geometricPrecision"/></svg><div class="tr" style="left:97px;top:480px"><span class="sx" style="transform:scaleX(0.8573);margin-right:-12.0px">PLA02_01.PDF</span></div><div class="hl" style="left:65px;top:504px;width:11px"></div><div class="vl" style="left:65px;top:496px;height:24px"></div><svg class="a" style="left:76px;top:496px" width="16" height="16" viewBox="0 0 16 16" shape-rendering="crispEdges"><path d="M1.5 0.5h9l3 3v12h-12z" fill="#fff" stroke="#808080"/><path d="M13.5 3.5v12h-12" fill="none" stroke="#404040"/><rect x="3" y="4" width="10" height="9" fill="#000"/><rect x="3" y="4" width="10" height="2" fill="#000080"/><rect x="4" y="6" width="8" height="6" fill="#fff"/><path d="M4 9l2-2v4z" fill="#ff0000"/><circle cx="9" cy="9" r="1.5" fill="#0060ff" shape-rendering="geometricPrecision"/><rect x="8" y="10" width="3" height="1" fill="#00a000"/><rect x="4" y="4" width="1" height="1" fill="#ffc000"/></svg><div class="tr" style="left:97px;top:496px"><span class="sx" style="transform:scaleX(0.8556);margin-right:-12.0px">PLA03_01.XLS</span></div><div class="hl" style="left:65px;top:520px;width:11px"></div><div class="vl" style="left:65px;top:512px;height:24px"></div><svg class="a" style="left:76px;top:512px" width="16" height="16" viewBox="0 0 16 16" shape-rendering="crispEdges"><path d="M1.5 0.5h9l3 3v12h-12z" fill="#fff" stroke="#808080"/><path d="M13.5 3.5v12h-12" fill="none" stroke="#404040"/><rect x="3" y="4" width="10" height="9" fill="#000"/><rect x="3" y="4" width="10" height="2" fill="#000080"/><rect x="4" y="6" width="8" height="6" fill="#fff"/><path d="M4 9l2-2v4z" fill="#ff0000"/><circle cx="9" cy="9" r="1.5" fill="#0060ff" shape-rendering="geometricPrecision"/><rect x="8" y="10" width="3" height="1" fill="#00a000"/><rect x="4" y="4" width="1" height="1" fill="#ffc000"/></svg><div class="tr" style="left:97px;top:512px"><span class="sx" style="transform:scaleX(0.8571);margin-right:-12.0px">PLA03_02.XLS</span></div><div class="hl" style="left:65px;top:536px;width:11px"></div><div class="vl" style="left:65px;top:528px;height:9px"></div><svg class="a" style="left:76px;top:528px" width="16" height="16" viewBox="0 0 16 16" shape-rendering="crispEdges"><path d="M3.5 0.5h10l2 2v13h-12z" fill="#e0e0e0" stroke="#000"/><rect x="4" y="1" width="9" height="2" fill="#fff"/><rect x="0" y="2" width="11" height="4" fill="#000"/><rect x="1" y="3" width="9" height="2" fill="#ff0000"/><rect x="13" y="1" width="2" height="2" fill="#ff0000"/><path d="M9 6v3l-4 5M9 9l5 2" fill="none" stroke="#ff0000" shape-rendering="geometricPrecision"/></svg><div class="tr" style="left:97px;top:528px"><span class="sx" style="transform:scaleX(0.8573);margin-right:-12.0px">PLA04_01.PDF</span></div><div class="hl" style="left:32px;top:552px;width:6px"></div><div class="vl" style="left:27px;top:544px;height:88px"></div><div class="bx" style="left:23px;top:548px"></div><svg class="a" style="left:38px;top:544px" width="16" height="16" viewBox="0 0 16 16" shape-rendering="crispEdges"><path d="M1.5 3.5l1-1h4l1 1h6l1 1v9.5h-13.5z" fill="#ffe890" stroke="#c88a20" shape-rendering="geometricPrecision"/><path d="M2.5 6.5h12v7h-12z" fill="#fff0a0" stroke="#c88a20"/><rect x="3" y="7" width="11" height="2" fill="#fffbe0"/><path d="M2 14.5h13" stroke="#806030"/></svg><div class="tr" style="left:59px;top:544px"><span class="sx" style="transform:scaleX(0.8769);margin-right:-8.0px">DRAWINGF</span></div><div class="hl" style="left:46px;top:568px;width:11px"></div><div class="vl" style="left:46px;top:560px;height:24px"></div><svg class="a" style="left:57px;top:560px" width="16" height="16" viewBox="0 0 16 16" shape-rendering="crispEdges"><path d="M1.5 0.5h9l3 3v11h-12z" fill="#fff" stroke="#404040"/><path d="M10.5 0.5v3h3" fill="none" stroke="#808080"/><ellipse cx="7.5" cy="5.5" rx="5.5" ry="1.6" fill="none" stroke="#8080ff" stroke-width="0.7" shape-rendering="geometricPrecision"/><circle cx="7.5" cy="5.5" r="3" fill="#00a000" shape-rendering="geometricPrecision"/><path d="M5 4h2v2h-2z" fill="#00ffff"/><path d="M8 6h2v2h-2z" fill="#0000c0"/><rect x="3" y="10" width="9" height="3" fill="#80c0c0"/></svg><div class="tr" style="left:78px;top:560px"><span class="sx" style="transform:scaleX(0.8710);margin-right:-12.0px">DRAWINGF.XML</span></div><div class="hl" style="left:46px;top:584px;width:11px"></div><div class="vl" style="left:46px;top:576px;height:24px"></div><svg class="a" style="left:57px;top:576px" width="16" height="16" viewBox="0 0 16 16" shape-rendering="crispEdges"><path d="M1.5 0.5h9l3 3v11h-12z" fill="#fff" stroke="#404040"/><path d="M10.5 0.5v3h3" fill="none" stroke="#808080"/><ellipse cx="7.5" cy="5.5" rx="5.5" ry="1.6" fill="none" stroke="#8080ff" stroke-width="0.7" shape-rendering="geometricPrecision"/><circle cx="7.5" cy="5.5" r="3" fill="#00a000" shape-rendering="geometricPrecision"/><path d="M5 4h2v2h-2z" fill="#00ffff"/><path d="M8 6h2v2h-2z" fill="#0000c0"/><rect x="3" y="10" width="9" height="3" fill="#80c0c0"/></svg><div class="tr" style="left:78px;top:576px"><span class="sx" style="transform:scaleX(0.8734);margin-right:-10.0px">DRAW02.DTD</span></div><div class="hl" style="left:46px;top:600px;width:11px"></div><div class="vl" style="left:46px;top:592px;height:24px"></div><svg class="a" style="left:57px;top:592px" width="16" height="16" viewBox="0 0 16 16" shape-rendering="crispEdges"><path d="M1.5 0.5h9l3 3v12h-12z" fill="#fff" stroke="#808080"/><path d="M13.5 3.5v12h-12" fill="none" stroke="#404040"/><rect x="3" y="4" width="10" height="9" fill="#000"/><rect x="3" y="4" width="10" height="2" fill="#000080"/><rect x="4" y="6" width="8" height="6" fill="#fff"/><path d="M4 9l2-2v4z" fill="#ff0000"/><circle cx="9" cy="9" r="1.5" fill="#0060ff" shape-rendering="geometricPrecision"/><rect x="8" y="10" width="3" height="1" fill="#00a000"/><rect x="4" y="4" width="1" height="1" fill="#ffc000"/></svg><div class="tr" style="left:78px;top:592px"><span class="sx" style="transform:scaleX(0.8590);margin-right:-12.0px">CZEA0010.SXF</span></div><div class="hl" style="left:46px;top:616px;width:11px"></div><div class="vl" style="left:46px;top:608px;height:9px"></div><svg class="a" style="left:57px;top:608px" width="16" height="16" viewBox="0 0 16 16" shape-rendering="crispEdges"><path d="M1.5 0.5h9l3 3v12h-12z" fill="#fff" stroke="#808080"/><path d="M13.5 3.5v12h-12" fill="none" stroke="#404040"/><rect x="3" y="4" width="10" height="9" fill="#000"/><rect x="3" y="4" width="10" height="2" fill="#000080"/><rect x="4" y="6" width="8" height="6" fill="#fff"/><path d="M4 9l2-2v4z" fill="#ff0000"/><circle cx="9" cy="9" r="1.5" fill="#0060ff" shape-rendering="geometricPrecision"/><rect x="8" y="10" width="3" height="1" fill="#00a000"/><rect x="4" y="4" width="1" height="1" fill="#ffc000"/></svg><div class="tr" style="left:78px;top:608px"><span class="sx" style="transform:scaleX(0.8605);margin-right:-12.0px">CZEA0020.SXF</span></div><div class="hl" style="left:32px;top:632px;width:6px"></div><div class="vl" style="left:27px;top:624px;height:88px"></div><div class="bx" style="left:23px;top:628px"></div><svg class="a" style="left:38px;top:624px" width="16" height="16" viewBox="0 0 16 16" shape-rendering="crispEdges"><path d="M1.5 3.5l1-1h4l1 1h6l1 1v9.5h-13.5z" fill="#ffe890" stroke="#c88a20" shape-rendering="geometricPrecision"/><path d="M2.5 6.5h12v7h-12z" fill="#fff0a0" stroke="#c88a20"/><rect x="3" y="7" width="11" height="2" fill="#fffbe0"/><path d="M2 14.5h13" stroke="#806030"/></svg><div class="tr" style="left:59px;top:624px"><span class="sx" style="transform:scaleX(0.8810);margin-right:-5.0px">PHOTO</span></div><div class="hl" style="left:46px;top:648px;width:11px"></div><div class="vl" style="left:46px;top:640px;height:24px"></div><svg class="a" style="left:57px;top:640px" width="16" height="16" viewBox="0 0 16 16" shape-rendering="crispEdges"><path d="M1.5 0.5h9l3 3v11h-12z" fill="#fff" stroke="#404040"/><path d="M10.5 0.5v3h3" fill="none" stroke="#808080"/><ellipse cx="7.5" cy="5.5" rx="5.5" ry="1.6" fill="none" stroke="#8080ff" stroke-width="0.7" shape-rendering="geometricPrecision"/><circle cx="7.5" cy="5.5" r="3" fill="#00a000" shape-rendering="geometricPrecision"/><path d="M5 4h2v2h-2z" fill="#00ffff"/><path d="M8 6h2v2h-2z" fill="#0000c0"/><rect x="3" y="10" width="9" height="3" fill="#80c0c0"/></svg><div class="tr" style="left:78px;top:640px"><span class="sx" style="transform:scaleX(0.8714);margin-right:-9.0px">PHOTO.XML</span></div><div class="hl" style="left:46px;top:664px;width:11px"></div><div class="vl" style="left:46px;top:656px;height:24px"></div><svg class="a" style="left:57px;top:656px" width="16" height="16" viewBox="0 0 16 16" shape-rendering="crispEdges"><path d="M1.5 0.5h9l3 3v11h-12z" fill="#fff" stroke="#404040"/><path d="M10.5 0.5v3h3" fill="none" stroke="#808080"/><ellipse cx="7.5" cy="5.5" rx="5.5" ry="1.6" fill="none" stroke="#8080ff" stroke-width="0.7" shape-rendering="geometricPrecision"/><circle cx="7.5" cy="5.5" r="3" fill="#00a000" shape-rendering="geometricPrecision"/><path d="M5 4h2v2h-2z" fill="#00ffff"/><path d="M8 6h2v2h-2z" fill="#0000c0"/><rect x="3" y="10" width="9" height="3" fill="#80c0c0"/></svg><div class="tr" style="left:78px;top:656px"><span class="sx" style="transform:scaleX(0.8690);margin-right:-11.0px">PHOTO02.DTD</span></div><div class="hl" style="left:51px;top:680px;width:6px"></div><div class="vl" style="left:46px;top:672px;height:9px"></div><div class="bx" style="left:42px;top:676px"></div><svg class="a" style="left:57px;top:672px" width="16" height="16" viewBox="0 0 16 16" shape-rendering="crispEdges"><path d="M1.5 3.5l1-1h4l1 1h6l1 1v9.5h-13.5z" fill="#ffe890" stroke="#c88a20" shape-rendering="geometricPrecision"/><path d="M2.5 6.5h12v7h-12z" fill="#fff0a0" stroke="#c88a20"/><rect x="3" y="7" width="11" height="2" fill="#fffbe0"/><path d="M2 14.5h13" stroke="#806030"/></svg><div class="tr" style="left:78px;top:672px"><span class="sx" style="transform:scaleX(0.8889);margin-right:-3.0px">ORG</span></div><div class="hl" style="left:65px;top:696px;width:11px"></div><div class="vl" style="left:65px;top:688px;height:9px"></div><svg class="a" style="left:76px;top:688px" width="16" height="16" viewBox="0 0 16 16" shape-rendering="crispEdges"><path d="M1.5 0.5h9l3 3v12h-12z" fill="#fff" stroke="#808080"/><path d="M13.5 3.5v12h-12" fill="none" stroke="#404040"/><rect x="3" y="4" width="10" height="9" fill="#000"/><rect x="3" y="4" width="10" height="2" fill="#000080"/><rect x="4" y="6" width="8" height="6" fill="#fff"/><path d="M4 9l2-2v4z" fill="#ff0000"/><circle cx="9" cy="9" r="1.5" fill="#0060ff" shape-rendering="geometricPrecision"/><rect x="8" y="10" width="3" height="1" fill="#00a000"/><rect x="4" y="4" width="1" height="1" fill="#ffc000"/></svg><div class="tr" style="left:97px;top:688px"><span class="sx" style="transform:scaleX(0.8538);margin-right:-12.0px">P0000001.JPG</span></div><div class="hl" style="left:32px;top:712px;width:6px"></div><div class="vl" style="left:27px;top:704px;height:9px"></div><div class="bx" style="left:23px;top:708px"></div><svg class="a" style="left:38px;top:704px" width="16" height="16" viewBox="0 0 16 16" shape-rendering="crispEdges"><path d="M1.5 3.5l1-1h4l1 1h6l1 1v9.5h-13.5z" fill="#ffe890" stroke="#c88a20" shape-rendering="geometricPrecision"/><path d="M2.5 6.5h12v7h-12z" fill="#fff0a0" stroke="#c88a20"/><rect x="3" y="7" width="11" height="2" fill="#fffbe0"/><path d="M2 14.5h13" stroke="#806030"/></svg><div class="tr" style="left:59px;top:704px"><span class="sx" style="transform:scaleX(0.8810);margin-right:-5.0px">OTHRS</span></div></div><div class="a dith" style="left:261px;top:71px;width:16px;height:675px"></div><div class="a sbtn" style="left:261px;top:71px;width:16px;height:16px"><svg class="a" style="left:4px;top:6px" width="7" height="4" viewBox="0 0 7 4" shape-rendering="crispEdges"><path d="M3 0h1v1h1v1h1v1h1v1h-7v-1h1v-1h1v-1h1z" fill="#000"/></svg></div><div class="a sbtn" style="left:261px;top:87px;width:16px;height:403px"></div><div class="a sbtn" style="left:261px;top:730px;width:16px;height:16px"><svg class="a" style="left:4px;top:6px" width="7" height="4" viewBox="0 0 7 4" shape-rendering="crispEdges"><path d="M0 0h7v1h-1v1h-1v1h-1v1h-1v-1h-1v-1h-1v-1h-1z" fill="#000"/></svg></div><!-- right panel -->
<div class="a raised" style="left:286px;top:70px;width:142px;height:25px"></div><svg class="a" style="left:301px;top:75px" width="11" height="15" viewBox="0 0 11 15" shape-rendering="crispEdges"><rect x="0" y="0" width="11" height="15" fill="#ffffc0"/><path d="M8 3.5A3.5 3.5 0 0 0 2.5 6.5M2.5 9.5A3.5 3.5 0 0 0 8.5 10" fill="none" stroke="#00a000" stroke-width="1.6" shape-rendering="geometricPrecision"/><path d="M9 1v4h-4z" fill="#00a000"/><path d="M1 13v-4h4z" fill="#00a000"/></svg><div class="a" style="left:322px;top:77px;line-height:14px;white-space:nowrap"><span class="jb" style="width:94px"><span style="font-family:J16;letter-spacing:0px">最新</span><span style="font-family:J14;letter-spacing:0px">の</span><span style="font-family:J16;letter-spacing:0px">情報</span><span style="font-family:J14;letter-spacing:0px">に</span><span style="font-family:J16;letter-spacing:0px">更新</span></span></div><div class="a" style="left:443px;top:73px;width:285px;height:25px;box-shadow:inset 1px 1px #808080,inset -1px -1px #fff,inset 2px 2px #fff,inset -2px -2px #808080"></div><svg class="a" style="left:452px;top:80px" width="12" height="12" viewBox="0 0 12 12" shape-rendering="crispEdges"><circle cx="6" cy="6" r="5.5" fill="#fff"/><path d="M1.5 8.5A5 5 0 0 1 8.5 1.5" fill="none" stroke="#808080" shape-rendering="geometricPrecision"/><path d="M2.5 8.5A4 4 0 0 1 8.5 2.5" fill="none" stroke="#000" shape-rendering="geometricPrecision"/><path d="M10.5 3.5A5 5 0 0 1 3.5 10.5" fill="none" stroke="#fff" shape-rendering="geometricPrecision"/><path d="M9.5 3.5A4 4 0 0 1 3.5 9.5" fill="none" stroke="#dfdfdf" shape-rendering="geometricPrecision"/><circle cx="6" cy="6" r="2" fill="#000" shape-rendering="geometricPrecision"/></svg><div class="a" style="left:469px;top:81px;line-height:14px;white-space:nowrap"><span class="jb" style="width:48px"><span style="font-family:J16;letter-spacing:0px">通常表示</span></span></div><svg class="a" style="left:590px;top:80px" width="12" height="12" viewBox="0 0 12 12" shape-rendering="crispEdges"><circle cx="6" cy="6" r="5.5" fill="#fff"/><path d="M1.5 8.5A5 5 0 0 1 8.5 1.5" fill="none" stroke="#808080" shape-rendering="geometricPrecision"/><path d="M2.5 8.5A4 4 0 0 1 8.5 2.5" fill="none" stroke="#000" shape-rendering="geometricPrecision"/><path d="M10.5 3.5A5 5 0 0 1 3.5 10.5" fill="none" stroke="#fff" shape-rendering="geometricPrecision"/><path d="M9.5 3.5A4 4 0 0 1 3.5 9.5" fill="none" stroke="#dfdfdf" shape-rendering="geometricPrecision"/></svg><div class="a" style="left:606px;top:81px;line-height:14px;white-space:nowrap"><span class="jb" style="width:84.9px"><span style="font-family:J12;letter-spacing:-0.3px">スタイルシート</span><span style="font-family:J16;letter-spacing:0px">表示</span></span></div><div class="a" style="left:283px;top:100px;width:741px;height:609px;background:#fff;box-shadow:inset 1px 1px #808080,inset 2px 2px #000,inset -1px -1px #fff,inset -2px -2px #dfdfdf"></div><div class="a" style="left:285px;top:102px;width:721px;height:605px;overflow:hidden"><div class="xl" style="left:24px;top:16px"><span class="m"><span style="letter-spacing:1.17px">&lt;?xml version="1.0" encoding="Shift_JIS" ?&gt;</span></span></div><div class="xl" style="left:24px;top:33px"><span class="m"><span style="letter-spacing:1.17px">&lt;!DOCTYPE constdata </span></span><span class="m" style="font-style:italic"><span style="letter-spacing:1.54px">(View Source for full doctype...)</span></span><span class="m"><span style="letter-spacing:1.17px">&gt;</span></span></div><div class="a" style="left:11px;top:59px;width:6px;height:1px;background:#ff0000"></div><div class="xl" style="left:24px;top:50px"><span class="m"><span style="letter-spacing:1.17px">&lt;</span></span><span class="n"><span style="letter-spacing:1.17px">constdata DTD_version</span></span><span class="m"><span style="letter-spacing:1.17px">="</span></span><span class="b"><span style="letter-spacing:2.34px">01</span></span><span class="m"><span style="letter-spacing:1.17px">"&gt;</span></span></div><div class="a" style="left:24px;top:76px;width:6px;height:1px;background:#ff0000"></div><div class="xl" style="left:37px;top:67px"><span class="m"><span style="letter-spacing:1.17px">&lt;</span></span><span class="n"><span class="jb" style="width:52.68px"><span style="font-family:J17;letter-spacing:0.17px">基礎情報</span></span></span><span class="m"><span style="letter-spacing:1.17px">&gt;</span></span></div><div class="xl" style="left:50px;top:84px"><span class="m"><span style="letter-spacing:1.17px">&lt;</span></span><span class="n"><span class="jb" style="width:70.51px"><span style="font-family:J14;letter-spacing:0.29px">メ</span><span style="font-family:J18;letter-spacing:0.16px">デ</span><span style="font-family:J12;letter-spacing:-1.57px">ィ</span><span style="font-family:J14;letter-spacing:0.29px">ア</span><span style="font-family:J17;letter-spacing:0.17px">番号</span></span></span><span class="m"><span style="letter-spacing:1.17px">&gt;</span></span><span class="b"><span style="letter-spacing:2.34px">1</span></span><span class="m"><span style="letter-spacing:1.17px">&lt;/</span></span><span class="n"><span class="jb" style="width:70.51px"><span style="font-family:J14;letter-spacing:0.29px">メ</span><span style="font-family:J18;letter-spacing:0.16px">デ</span><span style="font-family:J12;letter-spacing:-1.57px">ィ</span><span style="font-family:J14;letter-spacing:0.29px">ア</span><span style="font-family:J17;letter-spacing:0.17px">番号</span></span></span><span class="m"><span style="letter-spacing:1.17px">&gt;</span></span></div><div class="xl" style="left:50px;top:101px"><span class="m"><span style="letter-spacing:1.17px">&lt;</span></span><span class="n"><span class="jb" style="width:83.68px"><span style="font-family:J14;letter-spacing:0.29px">メ</span><span style="font-family:J18;letter-spacing:0.16px">デ</span><span style="font-family:J12;letter-spacing:-1.57px">ィ</span><span style="font-family:J14;letter-spacing:0.29px">ア</span><span style="font-family:J17;letter-spacing:0.17px">総枚数</span></span></span><span class="m"><span style="letter-spacing:1.17px">&gt;</span></span><span class="b"><span style="letter-spacing:2.34px">1</span></span><span class="m"><span style="letter-spacing:1.17px">&lt;/</span></span><span class="n"><span class="jb" style="width:83.68px"><span style="font-family:J14;letter-spacing:0.29px">メ</span><span style="font-family:J18;letter-spacing:0.16px">デ</span><span style="font-family:J12;letter-spacing:-1.57px">ィ</span><span style="font-family:J14;letter-spacing:0.29px">ア</span><span style="font-family:J17;letter-spacing:0.17px">総枚数</span></span></span><span class="m"><span style="letter-spacing:1.17px">&gt;</span></span></div><div class="xl" style="left:50px;top:118px"><span class="m"><span style="letter-spacing:1.17px">&lt;</span></span><span class="n"><span class="jb" style="width:110.02px"><span style="font-family:J17;letter-spacing:0.17px">発注図面</span><span style="font-family:J14;letter-spacing:0.29px">フ</span><span style="font-family:J12;letter-spacing:-1.57px">ォ</span><span style="font-family:J14;letter-spacing:0.29px">ル</span><span style="font-family:J18;letter-spacing:0.16px">ダ</span><span style="font-family:J17;letter-spacing:0.17px">名</span></span></span><span class="m"><span style="letter-spacing:1.17px">&gt;</span></span><span class="b"><span style="letter-spacing:1.88px">DRAWINGS</span></span><span class="m"><span style="letter-spacing:1.17px">&lt;/</span></span><span class="n"><span class="jb" style="width:110.02px"><span style="font-family:J17;letter-spacing:0.17px">発注図面</span><span style="font-family:J14;letter-spacing:0.29px">フ</span><span style="font-family:J12;letter-spacing:-1.57px">ォ</span><span style="font-family:J14;letter-spacing:0.29px">ル</span><span style="font-family:J18;letter-spacing:0.16px">ダ</span><span style="font-family:J17;letter-spacing:0.17px">名</span></span></span><span class="m"><span style="letter-spacing:1.17px">&gt;</span></span></div><div class="xl" style="left:50px;top:135px"><span class="m"><span style="letter-spacing:1.17px">&lt;</span></span><span class="n"><span class="jb" style="width:223.81px"><span style="font-family:J17;letter-spacing:0.17px">特記仕様書</span><span style="font-family:J14;letter-spacing:0.29px">オリ</span><span style="font-family:J18;letter-spacing:0.16px">ジ</span><span style="font-family:J14;letter-spacing:0.29px">ナルフ</span><span style="font-family:J12;letter-spacing:-1.57px">ァ</span><span style="font-family:J14;letter-spacing:0.29px">イルフ</span><span style="font-family:J12;letter-spacing:-1.57px">ォ</span><span style="font-family:J14;letter-spacing:0.29px">ル</span><span style="font-family:J18;letter-spacing:0.16px">ダ</span><span style="font-family:J17;letter-spacing:0.17px">名</span></span></span><span class="m"><span style="letter-spacing:1.17px">&gt;</span></span><span class="b"><span style="letter-spacing:1.88px">DRAWINGS/SPEC</span></span><span class="m"><span style="letter-spacing:1.17px">&lt;/</span></span><span class="n"><span class="jb" style="width:223.81px"><span style="font-family:J17;letter-spacing:0.17px">特記仕様書</span><span style="font-family:J14;letter-spacing:0.29px">オリ</span><span style="font-family:J18;letter-spacing:0.16px">ジ</span><span style="font-family:J14;letter-spacing:0.29px">ナルフ</span><span style="font-family:J12;letter-spacing:-1.57px">ァ</span><span style="font-family:J14;letter-spacing:0.29px">イルフ</span><span style="font-family:J12;letter-spacing:-1.57px">ォ</span><span style="font-family:J14;letter-spacing:0.29px">ル</span><span style="font-family:J18;letter-spacing:0.16px">ダ</span><span style="font-family:J17;letter-spacing:0.17px">名</span></span></span></div><div class="xl" style="left:63px;top:152px"><span class="m"><span style="letter-spacing:1.17px">&gt;</span></span></div><div class="xl" style="left:50px;top:169px"><span class="m"><span style="letter-spacing:1.17px">&lt;</span></span><span class="n"><span class="jb" style="width:110.02px"><span style="font-family:J17;letter-spacing:0.17px">打合せ簿</span><span style="font-family:J14;letter-spacing:0.29px">フ</span><span style="font-family:J12;letter-spacing:-1.57px">ォ</span><span style="font-family:J14;letter-spacing:0.29px">ル</span><span style="font-family:J18;letter-spacing:0.16px">ダ</span><span style="font-family:J17;letter-spacing:0.17px">名</span></span></span><span class="m"><span style="letter-spacing:1.17px">&gt;</span></span><span class="b"><span style="letter-spacing:1.88px">MEET</span></span><span class="m"><span style="letter-spacing:1.17px">&lt;/</span></span><span class="n"><span class="jb" style="width:110.02px"><span style="font-family:J17;letter-spacing:0.17px">打合せ簿</span><span style="font-family:J14;letter-spacing:0.29px">フ</span><span style="font-family:J12;letter-spacing:-1.57px">ォ</span><span style="font-family:J14;letter-spacing:0.29px">ル</span><span style="font-family:J18;letter-spacing:0.16px">ダ</span><span style="font-family:J17;letter-spacing:0.17px">名</span></span></span><span class="m"><span style="letter-spacing:1.17px">&gt;</span></span></div><div class="xl" style="left:50px;top:186px"><span class="m"><span style="letter-spacing:1.17px">&lt;</span></span><span class="n"><span class="jb" style="width:210.64px"><span style="font-family:J17;letter-spacing:0.17px">打合せ簿</span><span style="font-family:J14;letter-spacing:0.29px">オリ</span><span style="font-family:J18;letter-spacing:0.16px">ジ</span><span style="font-family:J14;letter-spacing:0.29px">ナルフ</span><span style="font-family:J12;letter-spacing:-1.57px">ァ</span><span style="font-family:J14;letter-spacing:0.29px">イルフ</span><span style="font-family:J12;letter-spacing:-1.57px">ォ</span><span style="font-family:J14;letter-spacing:0.29px">ル</span><span style="font-family:J18;letter-spacing:0.16px">ダ</span><span style="font-family:J17;letter-spacing:0.17px">名</span></span></span><span class="m"><span style="letter-spacing:1.17px">&gt;</span></span><span class="b"><span style="letter-spacing:1.88px">MEET/ORG</span></span><span class="m"><span style="letter-spacing:1.17px">&lt;/</span></span><span class="n"><span class="jb" style="width:210.64px"><span style="font-family:J17;letter-spacing:0.17px">打合せ簿</span><span style="font-family:J14;letter-spacing:0.29px">オリ</span><span style="font-family:J18;letter-spacing:0.16px">ジ</span><span style="font-family:J14;letter-spacing:0.29px">ナルフ</span><span style="font-family:J12;letter-spacing:-1.57px">ァ</span><span style="font-family:J14;letter-spacing:0.29px">イルフ</span><span style="font-family:J12;letter-spacing:-1.57px">ォ</span><span style="font-family:J14;letter-spacing:0.29px">ル</span><span style="font-family:J18;letter-spacing:0.16px">ダ</span><span style="font-family:J17;letter-spacing:0.17px">名</span></span></span><span class="m"><span style="letter-spacing:1.17px">&gt;</span></span></div><div class="xl" style="left:50px;top:203px"><span class="m"><span style="letter-spacing:1.17px">&lt;</span></span><span class="n"><span class="jb" style="width:123.19px"><span style="font-family:J17;letter-spacing:0.17px">施工計画書</span><span style="font-family:J14;letter-spacing:0.29px">フ</span><span style="font-family:J12;letter-spacing:-1.57px">ォ</span><span style="font-family:J14;letter-spacing:0.29px">ル</span><span style="font-family:J18;letter-spacing:0.16px">ダ</span><span style="font-family:J17;letter-spacing:0.17px">名</span></span></span><span class="m"><span style="letter-spacing:1.17px">&gt;</span></span><span class="b"><span style="letter-spacing:1.88px">PLAN</span></span><span class="m"><span style="letter-spacing:1.17px">&lt;/</span></span><span class="n"><span class="jb" style="width:123.19px"><span style="font-family:J17;letter-spacing:0.17px">施工計画書</span><span style="font-family:J14;letter-spacing:0.29px">フ</span><span style="font-family:J12;letter-spacing:-1.57px">ォ</span><span style="font-family:J14;letter-spacing:0.29px">ル</span><span style="font-family:J18;letter-spacing:0.16px">ダ</span><span style="font-family:J17;letter-spacing:0.17px">名</span></span></span><span class="m"><span style="letter-spacing:1.17px">&gt;</span></span></div><div class="xl" style="left:50px;top:220px"><span class="m"><span style="letter-spacing:1.17px">&lt;</span></span><span class="n"><span class="jb" style="width:223.81px"><span style="font-family:J17;letter-spacing:0.17px">施工計画書</span><span style="font-family:J14;letter-spacing:0.29px">オリ</span><span style="font-family:J18;letter-spacing:0.16px">ジ</span><span style="font-family:J14;letter-spacing:0.29px">ナルフ</span><span style="font-family:J12;letter-spacing:-1.57px">ァ</span><span style="font-family:J14;letter-spacing:0.29px">イルフ</span><span style="font-family:J12;letter-spacing:-1.57px">ォ</span><span style="font-family:J14;letter-spacing:0.29px">ル</span><span style="font-family:J18;letter-spacing:0.16px">ダ</span><span style="font-family:J17;letter-spacing:0.17px">名</span></span></span><span class="m"><span style="letter-spacing:1.17px">&gt;</span></span><span class="b"><span style="letter-spacing:1.88px">PLAN/ORG</span></span><span class="m"><span style="letter-spacing:1.17px">&lt;/</span></span><span class="n"><span class="jb" style="width:223.81px"><span style="font-family:J17;letter-spacing:0.17px">施工計画書</span><span style="font-family:J14;letter-spacing:0.29px">オリ</span><span style="font-family:J18;letter-spacing:0.16px">ジ</span><span style="font-family:J14;letter-spacing:0.29px">ナルフ</span><span style="font-family:J12;letter-spacing:-1.57px">ァ</span><span style="font-family:J14;letter-spacing:0.29px">イルフ</span><span style="font-family:J12;letter-spacing:-1.57px">ォ</span><span style="font-family:J14;letter-spacing:0.29px">ル</span><span style="font-family:J18;letter-spacing:0.16px">ダ</span><span style="font-family:J17;letter-spacing:0.17px">名</span></span></span><span class="m"><span style="letter-spacing:1.17px">&gt;</span></span></div><div class="xl" style="left:50px;top:237px"><span class="m"><span style="letter-spacing:1.17px">&lt;</span></span><span class="n"><span class="jb" style="width:110.02px"><span style="font-family:J17;letter-spacing:0.17px">完成図面</span><span style="font-family:J14;letter-spacing:0.29px">フ</span><span style="font-family:J12;letter-spacing:-1.57px">ォ</span><span style="font-family:J14;letter-spacing:0.29px">ル</span><span style="font-family:J18;letter-spacing:0.16px">ダ</span><span style="font-family:J17;letter-spacing:0.17px">名</span></span></span><span class="m"><span style="letter-spacing:1.17px">&gt;</span></span><span class="b"><span style="letter-spacing:1.88px">DRAWINGF</span></span><span class="m"><span style="letter-spacing:1.17px">&lt;/</span></span><span class="n"><span class="jb" style="width:110.02px"><span style="font-family:J17;letter-spacing:0.17px">完成図面</span><span style="font-family:J14;letter-spacing:0.29px">フ</span><span style="font-family:J12;letter-spacing:-1.57px">ォ</span><span style="font-family:J14;letter-spacing:0.29px">ル</span><span style="font-family:J18;letter-spacing:0.16px">ダ</span><span style="font-family:J17;letter-spacing:0.17px">名</span></span></span><span class="m"><span style="letter-spacing:1.17px">&gt;</span></span></div><div class="xl" style="left:50px;top:254px"><span class="m"><span style="letter-spacing:1.17px">&lt;</span></span><span class="n"><span class="jb" style="width:83.68px"><span style="font-family:J17;letter-spacing:0.17px">写真</span><span style="font-family:J14;letter-spacing:0.29px">フ</span><span style="font-family:J12;letter-spacing:-1.57px">ォ</span><span style="font-family:J14;letter-spacing:0.29px">ル</span><span style="font-family:J18;letter-spacing:0.16px">ダ</span><span style="font-family:J17;letter-spacing:0.17px">名</span></span></span><span class="m"><span style="letter-spacing:1.17px">&gt;</span></span><span class="b"><span style="letter-spacing:1.88px">PHOTO</span></span><span class="m"><span style="letter-spacing:1.17px">&lt;/</span></span><span class="n"><span class="jb" style="width:83.68px"><span style="font-family:J17;letter-spacing:0.17px">写真</span><span style="font-family:J14;letter-spacing:0.29px">フ</span><span style="font-family:J12;letter-spacing:-1.57px">ォ</span><span style="font-family:J14;letter-spacing:0.29px">ル</span><span style="font-family:J18;letter-spacing:0.16px">ダ</span><span style="font-family:J17;letter-spacing:0.17px">名</span></span></span><span class="m"><span style="letter-spacing:1.17px">&gt;</span></span></div><div class="xl" style="left:50px;top:271px"><span class="m"><span style="letter-spacing:1.17px">&lt;</span></span><span class="n"><span class="jb" style="width:96.85px"><span style="font-family:J17;letter-spacing:0.17px">その他</span><span style="font-family:J14;letter-spacing:0.29px">フ</span><span style="font-family:J12;letter-spacing:-1.57px">ォ</span><span style="font-family:J14;letter-spacing:0.29px">ル</span><span style="font-family:J18;letter-spacing:0.16px">ダ</span><span style="font-family:J17;letter-spacing:0.17px">名</span></span></span><span class="m"><span style="letter-spacing:1.17px">&gt;</span></span><span class="b"><span style="letter-spacing:1.88px">OTHRS</span></span><span class="m"><span style="letter-spacing:1.17px">&lt;/</span></span><span class="n"><span class="jb" style="width:96.85px"><span style="font-family:J17;letter-spacing:0.17px">その他</span><span style="font-family:J14;letter-spacing:0.29px">フ</span><span style="font-family:J12;letter-spacing:-1.57px">ォ</span><span style="font-family:J14;letter-spacing:0.29px">ル</span><span style="font-family:J18;letter-spacing:0.16px">ダ</span><span style="font-family:J17;letter-spacing:0.17px">名</span></span></span><span class="m"><span style="letter-spacing:1.17px">&gt;</span></span></div><div class="xl" style="left:50px;top:288px"><span class="m"><span style="letter-spacing:1.17px">&lt;</span></span><span class="n"><span class="jb" style="width:197.47px"><span style="font-family:J17;letter-spacing:0.17px">その他</span><span style="font-family:J14;letter-spacing:0.29px">オリ</span><span style="font-family:J18;letter-spacing:0.16px">ジ</span><span style="font-family:J14;letter-spacing:0.29px">ナルフ</span><span style="font-family:J12;letter-spacing:-1.57px">ァ</span><span style="font-family:J14;letter-spacing:0.29px">イルフ</span><span style="font-family:J12;letter-spacing:-1.57px">ォ</span><span style="font-family:J14;letter-spacing:0.29px">ル</span><span style="font-family:J18;letter-spacing:0.16px">ダ</span><span style="font-family:J17;letter-spacing:0.17px">名</span></span></span><span class="m"><span style="letter-spacing:1.17px">&gt;</span></span><span class="b"><span style="letter-spacing:1.88px">OTHRS/ORG</span></span><span class="m"><span style="letter-spacing:1.17px">&lt;/</span></span><span class="n"><span class="jb" style="width:197.47px"><span style="font-family:J17;letter-spacing:0.17px">その他</span><span style="font-family:J14;letter-spacing:0.29px">オリ</span><span style="font-family:J18;letter-spacing:0.16px">ジ</span><span style="font-family:J14;letter-spacing:0.29px">ナルフ</span><span style="font-family:J12;letter-spacing:-1.57px">ァ</span><span style="font-family:J14;letter-spacing:0.29px">イルフ</span><span style="font-family:J12;letter-spacing:-1.57px">ォ</span><span style="font-family:J14;letter-spacing:0.29px">ル</span><span style="font-family:J18;letter-spacing:0.16px">ダ</span><span style="font-family:J17;letter-spacing:0.17px">名</span></span></span><span class="m"><span style="letter-spacing:1.17px">&gt;</span></span></div><div class="xl" style="left:50px;top:305px"><span class="m"><span style="letter-spacing:1.17px">&lt;</span></span><span class="n"><span class="jb" style="width:110.02px"><span style="font-family:J17;letter-spacing:0.17px">設備図書</span><span style="font-family:J14;letter-spacing:0.29px">フ</span><span style="font-family:J12;letter-spacing:-1.57px">ォ</span><span style="font-family:J14;letter-spacing:0.29px">ル</span><span style="font-family:J18;letter-spacing:0.16px">ダ</span><span style="font-family:J17;letter-spacing:0.17px">名</span></span></span><span class="m"><span style="letter-spacing:1.17px">&gt;</span></span><span class="b"><span style="letter-spacing:1.88px">FACILITY</span></span><span class="m"><span style="letter-spacing:1.17px">&lt;/</span></span><span class="n"><span class="jb" style="width:110.02px"><span style="font-family:J17;letter-spacing:0.17px">設備図書</span><span style="font-family:J14;letter-spacing:0.29px">フ</span><span style="font-family:J12;letter-spacing:-1.57px">ォ</span><span style="font-family:J14;letter-spacing:0.29px">ル</span><span style="font-family:J18;letter-spacing:0.16px">ダ</span><span style="font-family:J17;letter-spacing:0.17px">名</span></span></span><span class="m"><span style="letter-spacing:1.17px">&gt;</span></span></div><div class="xl" style="left:50px;top:322px"><span class="m"><span style="letter-spacing:1.17px">&lt;</span></span><span class="n"><span class="jb" style="width:210.64px"><span style="font-family:J17;letter-spacing:0.17px">設備図書</span><span style="font-family:J14;letter-spacing:0.29px">オリ</span><span style="font-family:J18;letter-spacing:0.16px">ジ</span><span style="font-family:J14;letter-spacing:0.29px">ナルフ</span><span style="font-family:J12;letter-spacing:-1.57px">ァ</span><span style="font-family:J14;letter-spacing:0.29px">イルフ</span><span style="font-family:J12;letter-spacing:-1.57px">ォ</span><span style="font-family:J14;letter-spacing:0.29px">ル</span><span style="font-family:J18;letter-spacing:0.16px">ダ</span><span style="font-family:J17;letter-spacing:0.17px">名</span></span></span><span class="m"><span style="letter-spacing:1.17px">&gt;</span></span><span class="b"><span style="letter-spacing:1.88px">FACILITY/ORG</span></span><span class="m"><span style="letter-spacing:1.17px">&lt;/</span></span><span class="n"><span class="jb" style="width:210.64px"><span style="font-family:J17;letter-spacing:0.17px">設備図書</span><span style="font-family:J14;letter-spacing:0.29px">オリ</span><span style="font-family:J18;letter-spacing:0.16px">ジ</span><span style="font-family:J14;letter-spacing:0.29px">ナルフ</span><span style="font-family:J12;letter-spacing:-1.57px">ァ</span><span style="font-family:J14;letter-spacing:0.29px">イルフ</span><span style="font-family:J12;letter-spacing:-1.57px">ォ</span><span style="font-family:J14;letter-spacing:0.29px">ル</span><span style="font-family:J18;letter-spacing:0.16px">ダ</span><span style="font-family:J17;letter-spacing:0.17px">名</span></span></span><span class="m"><span style="letter-spacing:1.17px">&gt;</span></span></div><div class="xl" style="left:37px;top:339px"><span class="m"><span style="letter-spacing:1.17px">&lt;/</span></span><span class="n"><span class="jb" style="width:52.68px"><span style="font-family:J17;letter-spacing:0.17px">基礎情報</span></span></span><span class="m"><span style="letter-spacing:1.17px">&gt;</span></span></div><div class="a" style="left:24px;top:365px;width:6px;height:1px;background:#ff0000"></div><div class="xl" style="left:37px;top:356px"><span class="m"><span style="letter-spacing:1.17px">&lt;</span></span><span class="n"><span class="jb" style="width:90.22px"><span style="font-family:J14;letter-spacing:0.29px">ソフトウ</span><span style="font-family:J12;letter-spacing:-1.57px">ェ</span><span style="font-family:J14;letter-spacing:0.29px">ア</span><span style="font-family:J17;letter-spacing:0.17px">情報</span></span></span><span class="m"><span style="letter-spacing:1.17px">&gt;</span></span></div><div class="xl" style="left:50px;top:373px"><span class="m"><span style="letter-spacing:1.17px">&lt;</span></span><span class="n"><span class="jb" style="width:77.05px"><span style="font-family:J14;letter-spacing:0.29px">ソフトウ</span><span style="font-family:J12;letter-spacing:-1.57px">ェ</span><span style="font-family:J14;letter-spacing:0.29px">ア</span><span style="font-family:J17;letter-spacing:0.17px">名</span></span></span><span class="m"><span style="letter-spacing:1.17px">&gt;</span></span><span class="b"><span class="jb" style="width:207.82px"><span style="font-family:J18;letter-spacing:0.17px">工事管理</span><span style="font-family:J16;letter-spacing:0.29px">フ</span><span style="font-family:J12;letter-spacing:-0.57px">ァ</span><span style="font-family:J16;letter-spacing:0.29px">イル</span><span style="font-family:J18;letter-spacing:0.17px">作成簡易</span><span style="font-family:J16;letter-spacing:0.29px">システム</span></span></span><span class="m"><span style="letter-spacing:1.17px">&lt;/</span></span><span class="n"><span class="jb" style="width:77.05px"><span style="font-family:J14;letter-spacing:0.29px">ソフトウ</span><span style="font-family:J12;letter-spacing:-1.57px">ェ</span><span style="font-family:J14;letter-spacing:0.29px">ア</span><span style="font-family:J17;letter-spacing:0.17px">名</span></span></span><span class="m"><span style="letter-spacing:1.17px">&gt;</span></span></div><div class="xl" style="left:50px;top:390px"><span class="m"><span style="letter-spacing:1.17px">&lt;</span></span><span class="n"><span class="jb" style="width:84.67px"><span style="font-family:J18;letter-spacing:0.16px">バ</span><span style="font-family:J14;letter-spacing:0.29px">ー</span><span style="font-family:J18;letter-spacing:0.16px">ジ</span><span style="font-family:J12;letter-spacing:-1.57px">ョ</span><span style="font-family:J14;letter-spacing:0.29px">ン</span><span style="font-family:J17;letter-spacing:0.17px">情報</span></span></span><span class="m"><span style="letter-spacing:1.17px">&gt;</span></span><span class="b"><span style="letter-spacing:2.34px">1</span><span style="letter-spacing:1.88px">.</span><span style="letter-spacing:2.34px">0</span></span><span class="m"><span style="letter-spacing:1.17px">&lt;/</span></span><span class="n"><span class="jb" style="width:84.67px"><span style="font-family:J18;letter-spacing:0.16px">バ</span><span style="font-family:J14;letter-spacing:0.29px">ー</span><span style="font-family:J18;letter-spacing:0.16px">ジ</span><span style="font-family:J12;letter-spacing:-1.57px">ョ</span><span style="font-family:J14;letter-spacing:0.29px">ン</span><span style="font-family:J17;letter-spacing:0.17px">情報</span></span></span><span class="m"><span style="letter-spacing:1.17px">&gt;</span></span></div><div class="xl" style="left:50px;top:407px"><span class="m"><span style="letter-spacing:1.17px">&lt;</span></span><span class="n"><span class="jb" style="width:47.04px"><span style="font-family:J14;letter-spacing:0.29px">メーカ</span><span style="font-family:J17;letter-spacing:0.17px">名</span></span></span><span class="m"><span style="letter-spacing:1.17px">&gt;</span></span><span class="b"><span class="jb" style="width:85.02px"><span style="font-family:J20;letter-spacing:2.17px">○○</span><span style="font-family:J18;letter-spacing:0.17px">株式会社</span></span></span><span class="m"><span style="letter-spacing:1.17px">&lt;/</span></span><span class="n"><span class="jb" style="width:47.04px"><span style="font-family:J14;letter-spacing:0.29px">メーカ</span><span style="font-family:J17;letter-spacing:0.17px">名</span></span></span><span class="m"><span style="letter-spacing:1.17px">&gt;</span></span></div><div class="xl" style="left:50px;top:424px"><span class="m"><span style="letter-spacing:1.17px">&lt;</span></span><span class="n"><span class="jb" style="width:73.38px"><span style="font-family:J14;letter-spacing:0.29px">メーカ</span><span style="font-family:J17;letter-spacing:0.17px">連絡先</span></span></span><span class="m"><span style="letter-spacing:1.17px">&gt;</span></span><span class="b"><span class="jb" style="width:113.36px"><span style="font-family:J20;letter-spacing:2.17px">○○</span><span style="font-family:J18;letter-spacing:0.17px">県△△市</span><span style="font-family:J20;letter-spacing:2.17px">□□</span></span><span style="letter-spacing:2.34px">1</span><span style="letter-spacing:1.88px">-</span><span style="letter-spacing:2.34px">1</span><span style="letter-spacing:1.88px">-</span><span style="letter-spacing:2.34px">1</span><span style="letter-spacing:1.88px">TEL:</span><span style="letter-spacing:2.34px">0</span><span style="letter-spacing:1.88px">xx-xxx-xxxxFAX:</span><span style="letter-spacing:2.34px">0</span><span style="letter-spacing:1.88px">xx-xxx-xxxx</span></span><span class="m"><span style="letter-spacing:1.17px">&lt;/</span></span><span class="n"><span class="jb" style="width:73.38px"><span style="font-family:J14;letter-spacing:0.29px">メーカ</span><span style="font-family:J17;letter-spacing:0.17px">連絡先</span></span></span><span class="m"><span style="letter-spacing:1.17px">&gt;</span></span></div><div class="xl" style="left:50px;top:441px"><span class="m"><span style="letter-spacing:1.17px">&lt;</span></span><span class="n"><span class="jb" style="width:80.91px"><span style="font-family:J14;letter-spacing:0.29px">ソフトメーカ</span><span style="font-family:J17;letter-spacing:0.17px">用</span></span><span style="letter-spacing:1.17px">TAG</span></span><span class="m"><span style="letter-spacing:1.17px"> /&gt;</span></span></div><div class="xl" style="left:37px;top:458px"><span class="m"><span style="letter-spacing:1.17px">&lt;/</span></span><span class="n"><span class="jb" style="width:90.22px"><span style="font-family:J14;letter-spacing:0.29px">ソフトウ</span><span style="font-family:J12;letter-spacing:-1.57px">ェ</span><span style="font-family:J14;letter-spacing:0.29px">ア</span><span style="font-family:J17;letter-spacing:0.17px">情報</span></span></span><span class="m"><span style="letter-spacing:1.17px">&gt;</span></span></div><div class="a" style="left:24px;top:484px;width:6px;height:1px;background:#ff0000"></div><div class="xl" style="left:37px;top:475px"><span class="m"><span style="letter-spacing:1.17px">&lt;</span></span><span class="n"><span class="jb" style="width:52.68px"><span style="font-family:J17;letter-spacing:0.17px">工事情報</span></span></span><span class="m"><span style="letter-spacing:1.17px">&gt;</span></span></div><div class="a" style="left:37px;top:501px;width:6px;height:1px;background:#ff0000"></div><div class="xl" style="left:50px;top:492px"><span class="m"><span style="letter-spacing:1.17px">&lt;</span></span><span class="n"><span class="jb" style="width:65.85px"><span style="font-family:J17;letter-spacing:0.17px">工事件名等</span></span></span><span class="m"><span style="letter-spacing:1.17px">&gt;</span></span></div><div class="xl" style="left:63px;top:509px"><span class="m"><span style="letter-spacing:1.17px">&lt;</span></span><span class="n"><span class="jb" style="width:52.68px"><span style="font-family:J17;letter-spacing:0.17px">発注年度</span></span></span><span class="m"><span style="letter-spacing:1.17px">&gt;</span></span><span class="b"><span style="letter-spacing:2.34px">1998</span></span><span class="m"><span style="letter-spacing:1.17px">&lt;/</span></span><span class="n"><span class="jb" style="width:52.68px"><span style="font-family:J17;letter-spacing:0.17px">発注年度</span></span></span><span class="m"><span style="letter-spacing:1.17px">&gt;</span></span></div><div class="xl" style="left:63px;top:526px"><span class="m"><span style="letter-spacing:1.17px">&lt;</span></span><span class="n"><span class="jb" style="width:52.68px"><span style="font-family:J17;letter-spacing:0.17px">工事番号</span></span></span><span class="m"><span style="letter-spacing:1.17px">&gt;</span></span><span class="b"><span style="letter-spacing:2.34px">01833270010004</span></span><span class="m"><span style="letter-spacing:1.17px">&lt;/</span></span><span class="n"><span class="jb" style="width:52.68px"><span style="font-family:J17;letter-spacing:0.17px">工事番号</span></span></span><span class="m"><span style="letter-spacing:1.17px">&gt;</span></span></div><div class="xl" style="left:63px;top:543px"><span class="m"><span style="letter-spacing:1.17px">&lt;</span></span><span class="n"><span class="jb" style="width:79.02px"><span style="font-family:J17;letter-spacing:0.17px">路線水系名等</span></span></span><span class="m"><span style="letter-spacing:1.17px">&gt;</span></span><span class="b"><span class="jb" style="width:56.68px"><span style="font-family:J20;letter-spacing:2.17px">○○○○</span></span></span><span class="m"><span style="letter-spacing:1.17px">&lt;/</span></span><span class="n"><span class="jb" style="width:79.02px"><span style="font-family:J17;letter-spacing:0.17px">路線水系名等</span></span></span><span class="m"><span style="letter-spacing:1.17px">&gt;</span></span></div><div class="xl" style="left:63px;top:560px"><span class="m"><span style="letter-spacing:1.17px">&lt;</span></span><span class="n"><span class="jb" style="width:52.68px"><span style="font-family:J17;letter-spacing:0.17px">工事名称</span></span></span><span class="m"><span style="letter-spacing:1.17px">&gt;</span></span><span class="b"><span class="jb" style="width:164.3px"><span style="font-family:J20;letter-spacing:2.17px">○○</span><span style="font-family:J18;letter-spacing:0.17px">受変電</span><span style="font-family:J12;letter-spacing:-0.57px">・</span><span style="font-family:J18;letter-spacing:0.17px">発電設備工事</span></span></span><span class="m"><span style="letter-spacing:1.17px">&lt;/</span></span><span class="n"><span class="jb" style="width:52.68px"><span style="font-family:J17;letter-spacing:0.17px">工事名称</span></span></span><span class="m"><span style="letter-spacing:1.17px">&gt;</span></span></div><div class="xl" style="left:63px;top:577px"><span class="m"><span style="letter-spacing:1.17px">&lt;</span></span><span class="n"><span class="jb" style="width:52.68px"><span style="font-family:J17;letter-spacing:0.17px">工事分野</span></span></span><span class="m"><span style="letter-spacing:1.17px">&gt;</span></span><span class="b"><span class="jb" style="width:28.34px"><span style="font-family:J18;letter-spacing:0.17px">電気</span></span></span><span class="m"><span style="letter-spacing:1.17px">&lt;/</span></span><span class="n"><span class="jb" style="width:52.68px"><span style="font-family:J17;letter-spacing:0.17px">工事分野</span></span></span><span class="m"><span style="letter-spacing:1.17px">&gt;</span></span></div><div class="xl" style="left:63px;top:594px"><span class="m"><span style="letter-spacing:1.17px">&lt;</span></span><span class="n"><span class="jb" style="width:52.68px"><span style="font-family:J17;letter-spacing:0.17px">工事業種</span></span></span><span class="m"><span style="letter-spacing:1.17px">&gt;</span></span><span class="b"><span class="jb" style="width:56.68px"><span style="font-family:J18;letter-spacing:0.17px">電気工事</span></span></span><span class="m"><span style="letter-spacing:1.17px">&lt;/</span></span><span class="n"><span class="jb" style="width:52.68px"><span style="font-family:J17;letter-spacing:0.17px">工事業種</span></span></span><span class="m"><span style="letter-spacing:1.17px">&gt;</span></span></div><div class="xl" style="left:63px;top:611px"><span class="m"><span style="letter-spacing:1.17px">&lt;</span></span><span class="n"><span class="jb" style="width:52.68px"><span style="font-family:J17;letter-spacing:0.17px">工事業種</span></span></span><span class="m"><span style="letter-spacing:1.17px">&gt;</span></span><span class="b"><span class="jb" style="width:56.68px"><span style="font-family:J18;letter-spacing:0.17px">電気工事</span></span></span><span class="m"><span style="letter-spacing:1.17px">&lt;/</span></span><span class="n"><span class="jb" style="width:52.68px"><span style="font-family:J17;letter-spacing:0.17px">工事業種</span></span></span><span class="m"><span style="letter-spacing:1.17px">&gt;</span></span></div></div><div class="a dith" style="left:1006px;top:102px;width:16px;height:605px"></div><div class="a sbtn" style="left:1006px;top:102px;width:16px;height:16px"><svg class="a" style="left:4px;top:6px" width="7" height="4" viewBox="0 0 7 4" shape-rendering="crispEdges"><path d="M3 0h1v1h1v1h1v1h1v1h-7v-1h1v-1h1v-1h1z" fill="#000"/></svg></div><div class="a sbtn" style="left:1006px;top:118px;width:16px;height:272px"></div><div class="a sbtn" style="left:1006px;top:691px;width:16px;height:16px"><svg class="a" style="left:4px;top:6px" width="7" height="4" viewBox="0 0 7 4" shape-rendering="crispEdges"><path d="M0 0h7v1h-1v1h-1v1h-1v1h-1v-1h-1v-1h-1v-1h-1z" fill="#000"/></svg></div><div class="a" style="left:283px;top:709px;width:740px;height:39px;box-shadow:inset 1px 1px #fff,inset -1px -1px #808080"></div><div class="a raised" style="left:938px;top:717px;width:75px;height:25px"></div><div class="a" style="left:951px;top:724px;line-height:14px;white-space:nowrap"><span class="jb" style="width:34px"><span style="font-family:J16;letter-spacing:0px">閉</span><span style="font-family:J14;letter-spacing:0px">じる</span></span><span class="sx" style="transform:scaleX(1.2500);margin-right:1.0px">(</span><u><span class="sx" style="transform:scaleX(0.8889);margin-right:-1.0px">C</span></u><span class="sx" style="transform:scaleX(1.2500);margin-right:1.0px">)</span></div><div class="a" style="left:0;top:748px;width:1024px;height:1px;background:#808080"></div><div class="a" style="left:0;top:751px;width:1024px;height:17px;box-shadow:inset 1px 1px #808080,inset -1px -1px #fff"></div></body></html>
